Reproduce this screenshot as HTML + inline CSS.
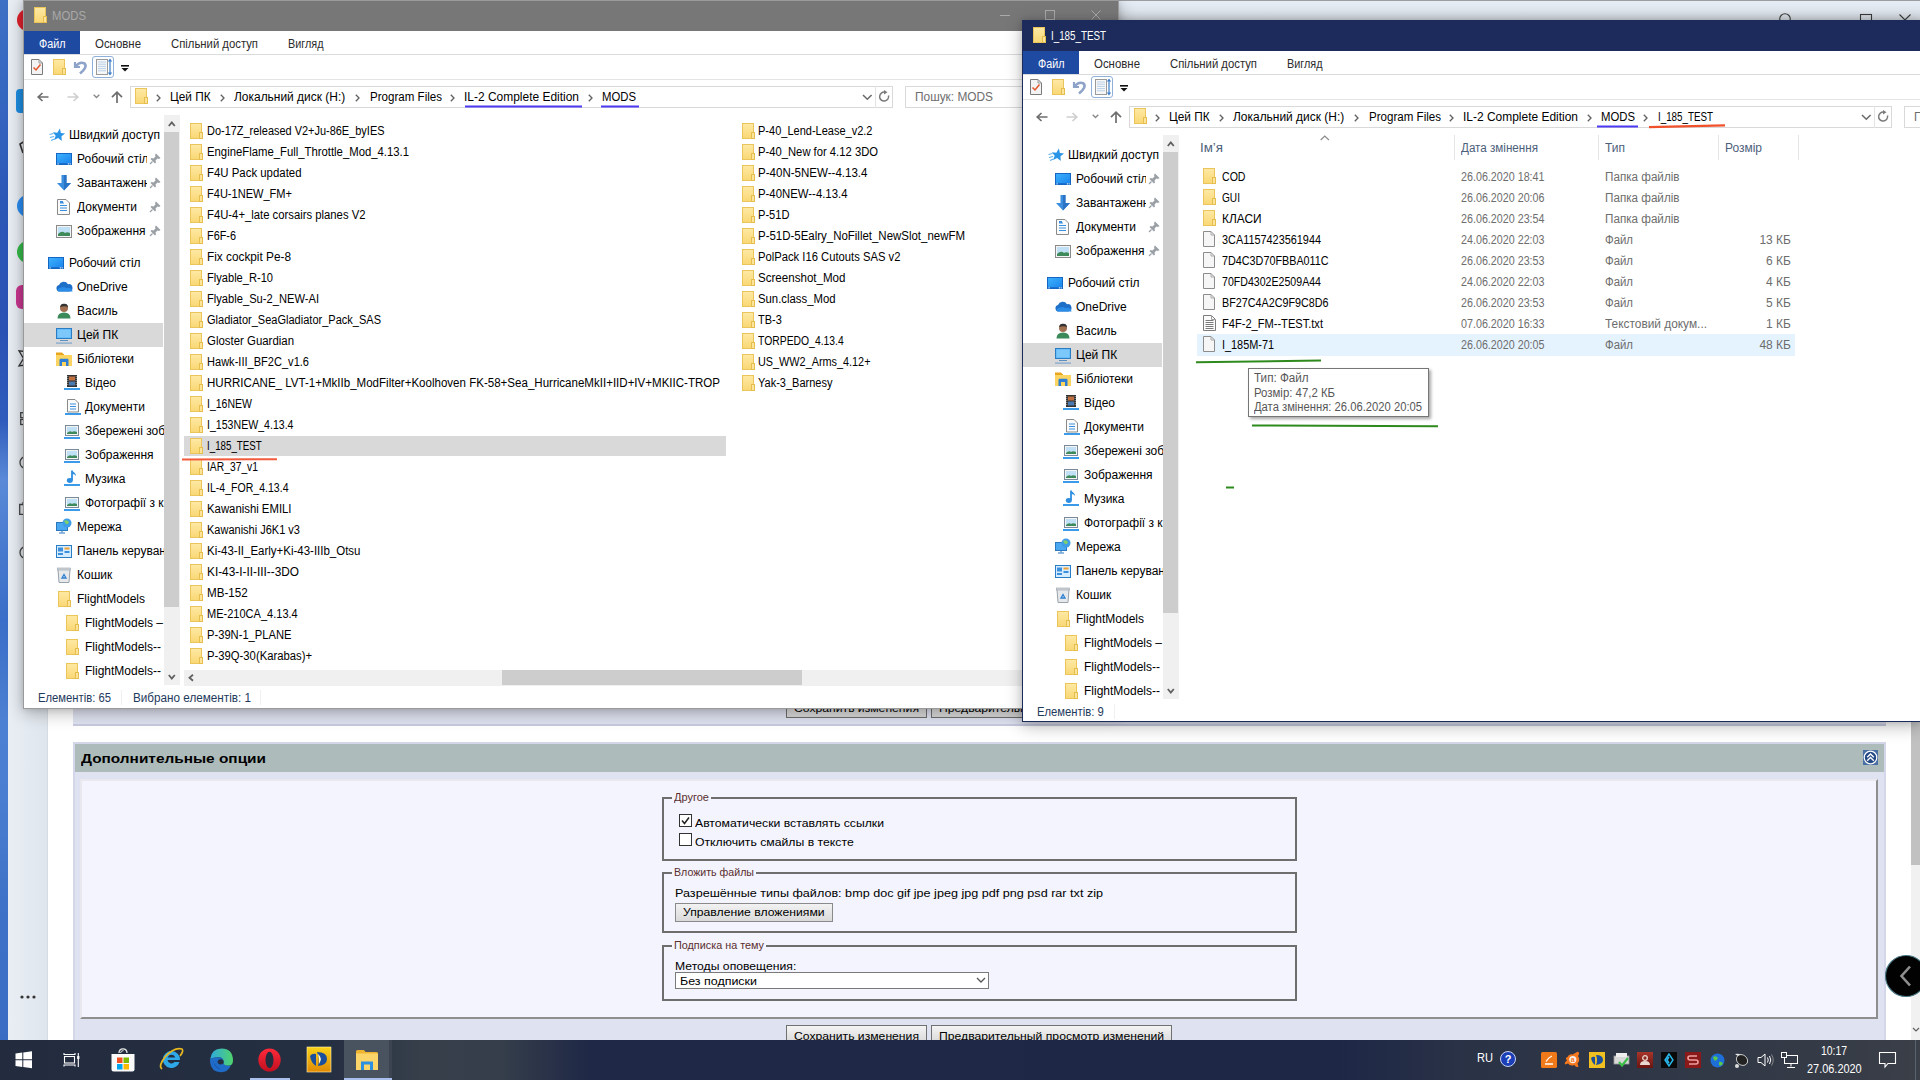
<!DOCTYPE html>
<html><head><meta charset="utf-8"><title>screen</title>
<style>
html,body{margin:0;padding:0;width:1920px;height:1080px;overflow:hidden;background:#fff;}
body{position:relative;font-family:"Liberation Sans", sans-serif;}
.t{position:absolute;white-space:pre;}
svg{overflow:visible}
</style></head><body>
<div style="position:absolute;left:0px;top:0px;width:8px;height:1040px;background:linear-gradient(180deg,#3e70c6 0px,#3566c0 100px,#2c58b8 200px,#2a52b4 330px,#2f5cbc 420px,#5a8ad8 480px,#4a7cd0 540px,#3a6ec8 620px,#4c80d2 720px,#4a7ed0 800px,#3e72c8 900px,#3a6cc4 1040px)"></div><div style="position:absolute;left:8px;top:0px;width:1912px;height:1040px;background:#fff"></div><div style="position:absolute;left:8px;top:0px;width:1912px;height:20px;background:linear-gradient(180deg,#e6edf5 0%,#dfe6ee 50%,#cdd2d8 100%)"></div><div style="position:absolute;left:8px;top:0px;width:1912px;height:1px;background:#9a9ea3"></div><svg style="position:absolute;left:1778px;top:12px;" width="14" height="10" viewBox="0 0 14 10"><circle cx="7" cy="7" r="5.3" fill="none" stroke="#3a3a3a" stroke-width="1.1"/></svg><svg style="position:absolute;left:1860px;top:14px;" width="13" height="8" viewBox="0 0 13 8"><rect x="0.5" x2="0" y="0.5" width="11" height="9" fill="none" stroke="#3a3a3a" stroke-width="1.1"/></svg><svg style="position:absolute;left:1899px;top:14px;" width="13" height="8" viewBox="0 0 13 8"><path d="M0.5 0.5 L6 6 L11.5 0.5" fill="none" stroke="#3a3a3a" stroke-width="1.1"/></svg><div style="position:absolute;left:8px;top:0px;width:40px;height:1040px;background:linear-gradient(90deg,#e9eef4 0%,#e3e9f0 60%,#dfe5ec 100%)"></div><div style="position:absolute;left:47px;top:0px;width:1px;height:1040px;background:#d6dce3"></div><svg style="position:absolute;left:16px;top:8px;" width="10" height="24" viewBox="0 0 10 24"><circle cx="12" cy="12" r="11" fill="#e0212d"/></svg><svg style="position:absolute;left:16px;top:89px;" width="10" height="24" viewBox="0 0 10 24"><rect x="0" y="0" width="24" height="24" rx="4" fill="#1e8de0"/></svg><svg style="position:absolute;left:19px;top:140px;" width="6" height="14" viewBox="0 0 6 14"><path d="M6 1 L1 4 L4 13" fill="none" stroke="#333" stroke-width="1.6"/></svg><svg style="position:absolute;left:16px;top:194px;" width="10" height="24" viewBox="0 0 10 24"><circle cx="12" cy="12" r="11" fill="#2a8cf0"/></svg><svg style="position:absolute;left:16px;top:240px;" width="10" height="24" viewBox="0 0 10 24"><circle cx="12" cy="12" r="11" fill="#35b94a"/></svg><svg style="position:absolute;left:16px;top:285px;" width="10" height="24" viewBox="0 0 10 24"><rect x="0" y="0" width="24" height="24" rx="6" fill="#c8378f"/></svg><svg style="position:absolute;left:18px;top:350px;" width="7" height="17" viewBox="0 0 7 17"><path d="M7 1.5 L1 0.8 L5.5 8.5 L1 16 L7 15" fill="none" stroke="#333" stroke-width="1.3"/></svg><svg style="position:absolute;left:20px;top:412px;" width="5" height="14" viewBox="0 0 5 14"><rect x="0.7" y="0.7" width="6" height="5" fill="none" stroke="#444" stroke-width="1.3"/><rect x="0.7" y="7.5" width="6" height="5" fill="none" stroke="#444" stroke-width="1.3"/></svg><svg style="position:absolute;left:19px;top:456px;" width="6" height="13" viewBox="0 0 6 13"><circle cx="7" cy="6.5" r="6" fill="none" stroke="#444" stroke-width="1.3"/></svg><svg style="position:absolute;left:19px;top:502px;" width="6" height="13" viewBox="0 0 6 13"><path d="M8 2.5 H0.7 V12.3 H8 M4 2.5 V0.7 H8" fill="none" stroke="#444" stroke-width="1.3"/></svg><svg style="position:absolute;left:19px;top:546px;" width="6" height="13" viewBox="0 0 6 13"><circle cx="7" cy="6.5" r="6" fill="none" stroke="#444" stroke-width="1.3"/></svg><svg style="position:absolute;left:20px;top:994px;" width="18" height="6" viewBox="0 0 18 6"><circle cx="2" cy="3" r="1.6" fill="#333"/><circle cx="8" cy="3" r="1.6" fill="#333"/><circle cx="14" cy="3" r="1.6" fill="#333"/></svg><div style="position:absolute;left:48px;top:20px;width:1863px;height:1020px;background:#fff"></div><div style="position:absolute;left:1911px;top:20px;width:9px;height:1020px;background:#f1f1f1"></div><div style="position:absolute;left:1911px;top:20px;width:9px;height:845px;background:#c1c1c1"></div><svg style="position:absolute;left:1912px;top:1026px;" width="8" height="8" viewBox="0 0 8 8"><path d="M1 2 L4 5 L7 2" fill="none" stroke="#606060" stroke-width="1.2"/></svg><div style="position:absolute;left:73px;top:560px;width:1813px;height:166px;background:#dfe2f0;border-bottom:2px solid #c8cbe0;box-sizing:border-box"></div><div style="position:absolute;left:786px;top:697px;width:141px;height:21px;background:linear-gradient(180deg,#f4f4f4 0%,#e4e4e4 50%,#d6d6d6 100%);border:1px solid #707070;box-sizing:border-box"></div><div class="t" style="left:794px;top:702.69px;font-size:11px;line-height:11px;color:#000;transform:scaleX(1.1065);transform-origin:left top;">Сохранить изменения</div><div style="position:absolute;left:931px;top:697px;width:241px;height:21px;background:linear-gradient(180deg,#f4f4f4 0%,#e4e4e4 50%,#d6d6d6 100%);border:1px solid #707070;box-sizing:border-box"></div><div class="t" style="left:939px;top:702.69px;font-size:11px;line-height:11px;color:#000;transform:scaleX(1.1074);transform-origin:left top;">Предварительный просмотр изменений</div><div style="position:absolute;left:73px;top:742px;width:1813px;height:298px;background:#dfe3f1"></div><div style="position:absolute;left:73px;top:742px;width:1813px;height:2px;background:#d4d7ea"></div><div style="position:absolute;left:73px;top:742px;width:2px;height:298px;background:#d4d7ea"></div><div style="position:absolute;left:1884px;top:742px;width:2px;height:298px;background:#d4d7ea"></div><div style="position:absolute;left:75px;top:744px;width:1809px;height:28px;background:#adbbbb"></div><div class="t" style="left:81px;top:752.30px;font-size:13px;line-height:13px;color:#000;font-weight:700;transform:scaleX(1.1833);transform-origin:left top;">Дополнительные опции</div><svg style="position:absolute;left:1863px;top:750px;" width="15" height="15" viewBox="0 0 15 15"><rect x="0" y="0" width="15" height="15" fill="#4a6fa5"/><circle cx="7.5" cy="7.5" r="6.3" fill="#254a86" stroke="#fff" stroke-width="1.2"/><path d="M4.2 7.2 L7.5 4 L10.8 7.2 M4.2 10.8 L7.5 7.6 L10.8 10.8" fill="none" stroke="#fff" stroke-width="1.4"/></svg><div style="position:absolute;left:80px;top:779px;width:1798px;height:240px;background:#f3f4fd;border-top:2px solid #e8e8ee;border-left:2px solid #e8e8ee;border-right:2px solid #8f8f8f;border-bottom:2px solid #8f8f8f;box-sizing:border-box"></div><div style="position:absolute;left:662px;top:797px;width:635px;height:64px;border:2px solid #6e6e6e;box-sizing:border-box"></div><div style="position:absolute;left:672px;top:796px;width:39px;height:4px;background:#f3f4fd"></div><div class="t" style="left:674px;top:792.19px;font-size:11px;line-height:11px;color:#5a2e2e;transform:scaleX(1.0013);transform-origin:left top;">Другое</div><div style="position:absolute;left:662px;top:872px;width:635px;height:61px;border:2px solid #6e6e6e;box-sizing:border-box"></div><div style="position:absolute;left:672px;top:871px;width:84px;height:4px;background:#f3f4fd"></div><div class="t" style="left:674px;top:867.19px;font-size:11px;line-height:11px;color:#5a2e2e;transform:scaleX(0.9657);transform-origin:left top;">Вложить файлы</div><div style="position:absolute;left:662px;top:945px;width:635px;height:56px;border:2px solid #6e6e6e;box-sizing:border-box"></div><div style="position:absolute;left:672px;top:944px;width:94px;height:4px;background:#f3f4fd"></div><div class="t" style="left:674px;top:940.19px;font-size:11px;line-height:11px;color:#5a2e2e;transform:scaleX(0.9836);transform-origin:left top;">Подписка на тему</div><div style="position:absolute;left:679px;top:814px;width:13px;height:13px;background:#fff;border:1px solid #333;box-sizing:border-box"></div><svg style="position:absolute;left:681px;top:816px;" width="9" height="9" viewBox="0 0 9 9"><path d="M1 4.5 L3.5 7.5 L8 1.5" fill="none" stroke="#222" stroke-width="1.5"/></svg><div class="t" style="left:695px;top:817.69px;font-size:11px;line-height:11px;color:#000;transform:scaleX(1.1099);transform-origin:left top;">Автоматически вставлять ссылки</div><div style="position:absolute;left:679px;top:833px;width:13px;height:13px;background:#fff;border:1px solid #333;box-sizing:border-box"></div><div class="t" style="left:695px;top:836.69px;font-size:11px;line-height:11px;color:#000;transform:scaleX(1.1116);transform-origin:left top;">Отключить смайлы в тексте</div><div class="t" style="left:675px;top:888.49px;font-size:11px;line-height:11px;color:#000;transform:scaleX(1.1460);transform-origin:left top;">Разрешённые типы файлов: bmp doc gif jpe jpeg jpg pdf png psd rar txt zip</div><div style="position:absolute;left:675px;top:903px;width:158px;height:19px;background:linear-gradient(180deg,#f2f2f2 0%,#e6e6e6 50%,#dadada 100%);border:1px solid #8a8a8a;box-sizing:border-box"></div><div class="t" style="left:683px;top:906.99px;font-size:11px;line-height:11px;color:#000;transform:scaleX(1.1088);transform-origin:left top;">Управление вложениями</div><div class="t" style="left:675px;top:960.69px;font-size:11px;line-height:11px;color:#000;transform:scaleX(1.1074);transform-origin:left top;">Методы оповещения:</div><div style="position:absolute;left:675px;top:972px;width:314px;height:17px;background:#fff;border:1px solid #7a7a7a;box-sizing:border-box"></div><div class="t" style="left:680px;top:975.69px;font-size:11px;line-height:11px;color:#000;transform:scaleX(1.1321);transform-origin:left top;">Без подписки</div><svg style="position:absolute;left:976px;top:977px;" width="10" height="7" viewBox="0 0 10 7"><path d="M1 1 L5 5 L9 1" fill="none" stroke="#555" stroke-width="1.3"/></svg><div style="position:absolute;left:786px;top:1025px;width:141px;height:21px;background:linear-gradient(180deg,#f4f4f4 0%,#e4e4e4 50%,#d6d6d6 100%);border:1px solid #707070;box-sizing:border-box"></div><div class="t" style="left:794px;top:1030.69px;font-size:11px;line-height:11px;color:#000;transform:scaleX(1.1065);transform-origin:left top;">Сохранить изменения</div><div style="position:absolute;left:931px;top:1025px;width:241px;height:21px;background:linear-gradient(180deg,#f4f4f4 0%,#e4e4e4 50%,#d6d6d6 100%);border:1px solid #707070;box-sizing:border-box"></div><div class="t" style="left:939px;top:1030.69px;font-size:11px;line-height:11px;color:#000;transform:scaleX(1.1074);transform-origin:left top;">Предварительный просмотр изменений</div><svg style="position:absolute;left:1884px;top:954px;" width="42" height="44" viewBox="0 0 42 44"><circle cx="22" cy="22" r="20.5" fill="#020202" stroke="#4a7a86" stroke-width="1.1"/><path d="M26 12.5 L17.5 22 L26 31.5" fill="none" stroke="#8e8e8e" stroke-width="2.6"/></svg><div style="position:absolute;left:23px;top:0px;width:1096px;height:709px;background:#fff;border:1px solid #9a9a9a;box-sizing:border-box;box-shadow:0 4px 16px rgba(0,0,0,0.28),0 0 6px rgba(0,0,0,0.12)"></div><div style="position:absolute;left:24px;top:1px;width:1094px;height:30px;background:#777777"></div><svg style="position:absolute;left:34px;top:7px;" width="14" height="16" viewBox="0 0 14 16"><defs><linearGradient id="fg" x1="0" y1="0" x2="0" y2="1"><stop offset="0" stop-color="#fee9a4"/><stop offset="1" stop-color="#f9d774"/></linearGradient></defs><rect x="0.5" y="0.5" width="11" height="15" fill="url(#fg)" stroke="#ebc55c"/><rect x="9.5" y="9.5" width="3" height="6" fill="#fde49a" stroke="#e6be4e"/></svg><div class="t" style="left:52px;top:9.84px;font-size:12px;line-height:12px;color:#a9a9a9;transform:scaleX(0.9444);transform-origin:left top;">MODS</div><svg style="position:absolute;left:1000px;top:15px;" width="11" height="2" viewBox="0 0 11 2"><path d="M0 0.5 H10" stroke="#a9a9a9" stroke-width="1"/></svg><svg style="position:absolute;left:1045px;top:10px;" width="11" height="11" viewBox="0 0 11 11"><rect x="0.5" y="0.5" width="9" height="9" fill="none" stroke="#a9a9a9" stroke-width="1"/></svg><svg style="position:absolute;left:1091px;top:10px;" width="11" height="11" viewBox="0 0 11 11"><path d="M0.5 0.5 L9.5 9.5 M9.5 0.5 L0.5 9.5" fill="none" stroke="#a9a9a9" stroke-width="1"/></svg><div style="position:absolute;left:24px;top:31px;width:1094px;height:23px;background:#fff"></div><div style="position:absolute;left:24px;top:54px;width:1094px;height:1px;background:#dadbdc"></div><div style="position:absolute;left:24px;top:31px;width:56px;height:23px;background:#1f4aa2"></div><div class="t" style="left:38.75px;top:37.84px;font-size:12px;line-height:12px;color:#fff;transform:scaleX(0.8978);transform-origin:left top;">Файл</div><div class="t" style="left:94.5px;top:37.84px;font-size:12px;line-height:12px;color:#2b2b2b;transform:scaleX(0.9521);transform-origin:left top;">Основне</div><div class="t" style="left:170.5px;top:37.84px;font-size:12px;line-height:12px;color:#2b2b2b;transform:scaleX(0.9429);transform-origin:left top;">Спільний доступ</div><div class="t" style="left:287.5px;top:37.84px;font-size:12px;line-height:12px;color:#2b2b2b;transform:scaleX(0.9027);transform-origin:left top;">Вигляд</div><div style="position:absolute;left:24px;top:79px;width:1094px;height:1px;background:#e3e4e5"></div><svg style="position:absolute;left:31px;top:59px;" width="12" height="16" viewBox="0 0 12 16"><path d="M0.5 0.5 H8 L11.5 4 V15.5 H0.5 Z" fill="#f3f3f3" stroke="#7a7a7a"/><path d="M8 0.5 V4 H11.5" fill="none" stroke="#9a9a9a"/><path d="M2.5 8.5 L5 11 L9.5 5.5" fill="none" stroke="#e2572b" stroke-width="1.5"/></svg><svg style="position:absolute;left:53px;top:59px;" width="14" height="16" viewBox="0 0 14 16"><defs><linearGradient id="fg" x1="0" y1="0" x2="0" y2="1"><stop offset="0" stop-color="#fee9a4"/><stop offset="1" stop-color="#f9d774"/></linearGradient></defs><rect x="0.5" y="0.5" width="11" height="15" fill="url(#fg)" stroke="#ebc55c"/><rect x="9.5" y="9.5" width="3" height="6" fill="#fde49a" stroke="#e6be4e"/></svg><svg style="position:absolute;left:74px;top:59px;" width="14" height="16" viewBox="0 0 14 16"><path d="M1 3 V8 H6" fill="none" stroke="#8ea3c9" stroke-width="2.2"/><path d="M1.5 7.5 Q6 2 10.5 4.5 Q14 8 6 14.5" fill="none" stroke="#8ea3c9" stroke-width="2.6"/></svg><svg style="position:absolute;left:92px;top:56px;" width="22" height="22" viewBox="0 0 22 22"><rect x="0.5" y="0.5" width="21" height="21" rx="2.5" fill="#fdfeff" stroke="#8fb0d8"/><rect x="4.5" y="3.5" width="11" height="15" fill="#f7f7f7" stroke="#9a9a9a"/><path d="M6 6 H14 M6 8.2 H14 M6 10.4 H14 M6 12.6 H14 M6 14.8 H14" stroke="#b8d0e8" stroke-width="1"/><path d="M18 4 V18 M16.5 5.5 L18 3.5 L19.5 5.5 M16.5 16.5 L18 18.5 L19.5 16.5" fill="none" stroke="#3b7cc9" stroke-width="1.2"/></svg><svg style="position:absolute;left:121px;top:65px;" width="8" height="7" viewBox="0 0 8 7"><rect x="0" y="0" width="8" height="1.6" fill="#111"/><path d="M0.5 3 H7.5 L4 6.5 Z" fill="#111"/></svg><svg style="position:absolute;left:37px;top:92px;" width="12" height="11" viewBox="0 0 12 11"><path d="M11.5 5 H1.5 M5.5 1 L1.2 5 L5.5 9" fill="none" stroke="#6e6e6e" stroke-width="1.7"/></svg><svg style="position:absolute;left:67px;top:92px;" width="12" height="11" viewBox="0 0 12 11"><path d="M0.5 5 H10.5 M6.5 1 L10.8 5 L6.5 9" fill="none" stroke="#cfcfcf" stroke-width="1.7"/></svg><svg style="position:absolute;left:93px;top:94px;" width="8" height="5" viewBox="0 0 8 5"><path d="M0.7 0.7 L3.5 3.5 L6.3 0.7" fill="none" stroke="#8a8a8a" stroke-width="1.4"/></svg><svg style="position:absolute;left:111px;top:91px;" width="12" height="12" viewBox="0 0 12 12"><path d="M6 12 V1.5 M1 6.2 L6 1.2 L11 6.2" fill="none" stroke="#6e6e6e" stroke-width="1.7"/></svg><div style="position:absolute;left:130px;top:86px;width:763px;height:22px;background:#fff;border:1px solid #d9d9d9;box-sizing:border-box"></div><div style="position:absolute;left:875px;top:86px;width:1px;height:22px;background:#e3e3e3"></div><svg style="position:absolute;left:135px;top:88px;" width="14" height="16" viewBox="0 0 14 16"><defs><linearGradient id="fg" x1="0" y1="0" x2="0" y2="1"><stop offset="0" stop-color="#fee9a4"/><stop offset="1" stop-color="#f9d774"/></linearGradient></defs><rect x="0.5" y="0.5" width="11" height="15" fill="url(#fg)" stroke="#ebc55c"/><rect x="9.5" y="9.5" width="3" height="6" fill="#fde49a" stroke="#e6be4e"/></svg><svg style="position:absolute;left:862px;top:94px;" width="11" height="7" viewBox="0 0 11 7"><path d="M1 1 L5.3 5.3 L9.6 1" fill="none" stroke="#6a6a6a" stroke-width="1.5"/></svg><svg style="position:absolute;left:879px;top:90px;" width="12" height="13" viewBox="0 0 12 13"><path d="M9.5 5.5 A4.5 4.5 0 1 1 6 2.2" fill="none" stroke="#7a7a7a" stroke-width="1.5"/><path d="M5 0 L8.5 2.3 L5 4.6 Z" fill="#7a7a7a"/></svg><svg style="position:absolute;left:156px;top:93.5px;" width="5" height="8" viewBox="0 0 5 8"><path d="M0.8 0.8 L4 4 L0.8 7.2" fill="none" stroke="#5f5f5f" stroke-width="1.3"/></svg><div class="t" style="left:170.4px;top:90.84px;font-size:12px;line-height:12px;color:#000;transform:scaleX(0.9854);transform-origin:left top;">Цей ПК</div><svg style="position:absolute;left:220px;top:93.5px;" width="5" height="8" viewBox="0 0 5 8"><path d="M0.8 0.8 L4 4 L0.8 7.2" fill="none" stroke="#5f5f5f" stroke-width="1.3"/></svg><div class="t" style="left:234px;top:90.84px;font-size:12px;line-height:12px;color:#000;transform:scaleX(0.9961);transform-origin:left top;">Локальний диск (H:)</div><svg style="position:absolute;left:355.4px;top:93.5px;" width="5" height="8" viewBox="0 0 5 8"><path d="M0.8 0.8 L4 4 L0.8 7.2" fill="none" stroke="#5f5f5f" stroke-width="1.3"/></svg><div class="t" style="left:369.6px;top:90.84px;font-size:12px;line-height:12px;color:#000;transform:scaleX(0.9640);transform-origin:left top;">Program Files</div><svg style="position:absolute;left:450px;top:93.5px;" width="5" height="8" viewBox="0 0 5 8"><path d="M0.8 0.8 L4 4 L0.8 7.2" fill="none" stroke="#5f5f5f" stroke-width="1.3"/></svg><div class="t" style="left:464px;top:90.84px;font-size:12px;line-height:12px;color:#000;transform:scaleX(0.9965);transform-origin:left top;">IL-2 Complete Edition</div><svg style="position:absolute;left:588px;top:93.5px;" width="5" height="8" viewBox="0 0 5 8"><path d="M0.8 0.8 L4 4 L0.8 7.2" fill="none" stroke="#5f5f5f" stroke-width="1.3"/></svg><div class="t" style="left:602px;top:90.84px;font-size:12px;line-height:12px;color:#000;transform:scaleX(0.9444);transform-origin:left top;">MODS</div><div style="position:absolute;left:905px;top:86px;width:300px;height:22px;background:#fff;border:1px solid #d9d9d9;box-sizing:border-box"></div><div class="t" style="left:914.6px;top:90.84px;font-size:12px;line-height:12px;color:#6d6d6d;transform:scaleX(0.9893);transform-origin:left top;">Пошук: MODS</div><div style="position:absolute;left:24px;top:115px;width:140px;height:570px;overflow:hidden;background:#fff"><div style="position:absolute;left:0px;top:208px;width:139px;height:24px;background:#d9d9d9"></div><svg style="position:absolute;left:25px;top:13px;" width="16" height="16" viewBox="0 0 16 16"><path d="M10 0.5 L11.6 4.8 L15.8 4.6 L12.6 7.8 L13.6 12.5 L9.6 10.2 L5.8 12.6 L6.8 8.2 L3.6 5.2 L8 4.9 Z" fill="#2a95e6" transform="rotate(8 10 7)"/><path d="M0.5 6.5 L4.5 5.5 M1 9.5 L5 8.5 M2 12.5 L5.5 11" stroke="#5ab0ee" stroke-width="1.1"/></svg><div class="t" style="left:45px;top:13.84px;font-size:12px;line-height:12px;color:#000;">Швидкий доступ</div><svg style="position:absolute;left:32px;top:38px;" width="16" height="12" viewBox="0 0 16 12"><defs><linearGradient id="dg" x1="0" y1="0" x2="1" y2="1"><stop offset="0" stop-color="#3db0fb"/><stop offset="1" stop-color="#1c86ee"/></linearGradient></defs><rect x="0" y="0" width="16" height="12" fill="#1466c4"/><rect x="1" y="1" width="14" height="9.2" fill="url(#dg)"/><rect x="1.5" y="10.4" width="1.2" height="1" fill="#fff"/><rect x="11.8" y="10.4" width="1.2" height="1" fill="#fff"/><rect x="13.6" y="10.4" width="1.2" height="1" fill="#fff"/></svg><div class="t" style="left:53px;top:37.84px;font-size:12px;line-height:12px;color:#000;width:70px;overflow:hidden;">Робочий стіл</div><svg style="position:absolute;left:126px;top:38px;" width="11" height="11" viewBox="0 0 11 11"><path d="M6 0.5 L10.5 5 L9 6 L7.5 5.5 L5.5 7.5 L6 9.5 L5 10.5 L0.5 6 L1.5 5 L3.5 5.5 L5.5 3.5 L5 2 Z" fill="#9aa0a6"/><path d="M2.5 8.5 L0 11" stroke="#9aa0a6" stroke-width="1.2"/></svg><svg style="position:absolute;left:32px;top:60px;" width="16" height="16" viewBox="0 0 16 16"><path d="M5.5 0 H10.5 V8 H15 L8 15.5 L1 8 H5.5 Z" fill="#3b8ede"/><path d="M8 0 H10.5 V8 H15 L8 15.5 Z" fill="#2a73c5"/></svg><div class="t" style="left:53px;top:61.84px;font-size:12px;line-height:12px;color:#000;width:70px;overflow:hidden;">Завантаження</div><svg style="position:absolute;left:126px;top:62px;" width="11" height="11" viewBox="0 0 11 11"><path d="M6 0.5 L10.5 5 L9 6 L7.5 5.5 L5.5 7.5 L6 9.5 L5 10.5 L0.5 6 L1.5 5 L3.5 5.5 L5.5 3.5 L5 2 Z" fill="#9aa0a6"/><path d="M2.5 8.5 L0 11" stroke="#9aa0a6" stroke-width="1.2"/></svg><svg style="position:absolute;left:33px;top:84px;" width="13" height="16" viewBox="0 0 13 16"><path d="M0.5 0.5 H9 L12.5 4 V15.5 H0.5 Z" fill="#fafafa" stroke="#8a8a8a"/><path d="M3 4 H7 M3 6.5 H10 M3 9 H10 M3 11.5 H10" stroke="#3c8fdc" stroke-width="1.2"/><rect x="3" y="2" width="3" height="2" fill="#3c8fdc"/></svg><div class="t" style="left:53px;top:85.84px;font-size:12px;line-height:12px;color:#000;width:70px;overflow:hidden;">Документи</div><svg style="position:absolute;left:126px;top:86px;" width="11" height="11" viewBox="0 0 11 11"><path d="M6 0.5 L10.5 5 L9 6 L7.5 5.5 L5.5 7.5 L6 9.5 L5 10.5 L0.5 6 L1.5 5 L3.5 5.5 L5.5 3.5 L5 2 Z" fill="#9aa0a6"/><path d="M2.5 8.5 L0 11" stroke="#9aa0a6" stroke-width="1.2"/></svg><svg style="position:absolute;left:32px;top:110px;" width="16" height="13" viewBox="0 0 16 13"><rect x="0.5" y="0.5" width="15" height="12" fill="#f4f4f4" stroke="#8a8a8a"/><rect x="2" y="2" width="12" height="9" fill="#bfe0f5"/><path d="M2 9 Q6 5 9 8 Q11 6.5 14 8 V11 H2 Z" fill="#3f8a5a"/></svg><div class="t" style="left:53px;top:109.84px;font-size:12px;line-height:12px;color:#000;width:70px;overflow:hidden;">Зображення</div><svg style="position:absolute;left:126px;top:110px;" width="11" height="11" viewBox="0 0 11 11"><path d="M6 0.5 L10.5 5 L9 6 L7.5 5.5 L5.5 7.5 L6 9.5 L5 10.5 L0.5 6 L1.5 5 L3.5 5.5 L5.5 3.5 L5 2 Z" fill="#9aa0a6"/><path d="M2.5 8.5 L0 11" stroke="#9aa0a6" stroke-width="1.2"/></svg><svg style="position:absolute;left:24px;top:142px;" width="16" height="12" viewBox="0 0 16 12"><defs><linearGradient id="dg" x1="0" y1="0" x2="1" y2="1"><stop offset="0" stop-color="#3db0fb"/><stop offset="1" stop-color="#1c86ee"/></linearGradient></defs><rect x="0" y="0" width="16" height="12" fill="#1466c4"/><rect x="1" y="1" width="14" height="9.2" fill="url(#dg)"/><rect x="1.5" y="10.4" width="1.2" height="1" fill="#fff"/><rect x="11.8" y="10.4" width="1.2" height="1" fill="#fff"/><rect x="13.6" y="10.4" width="1.2" height="1" fill="#fff"/></svg><div class="t" style="left:45px;top:141.84px;font-size:12px;line-height:12px;color:#000;">Робочий стіл</div><svg style="position:absolute;left:32px;top:166px;" width="17" height="11" viewBox="0 0 17 11"><path d="M3.5 10.5 A3.3 3.3 0 0 1 3 4 A5 5 0 0 1 12 3.2 A3.6 3.6 0 0 1 13.5 10.5 Z" fill="#1d6fc8"/><path d="M2 10.5 Q1 7 5 6.6 Q8 5 10 7 Q16 6 16.5 10.5 Z" fill="#2a8ce6"/></svg><div class="t" style="left:53px;top:165.84px;font-size:12px;line-height:12px;color:#000;">OneDrive</div><svg style="position:absolute;left:33px;top:188px;" width="14" height="16" viewBox="0 0 14 16"><path d="M0.5 15.5 Q0.5 9.5 7 9.5 Q13.5 9.5 13.5 15.5 Z" fill="#3b8a5a"/><circle cx="7" cy="5" r="4" fill="#a07050"/><path d="M3 4 Q4 0 7.5 0.8 Q11 1 11 4.5 Q9 2.5 3 4 Z" fill="#333"/></svg><div class="t" style="left:53px;top:189.84px;font-size:12px;line-height:12px;color:#000;">Василь</div><svg style="position:absolute;left:32px;top:213px;" width="16" height="16" viewBox="0 0 16 16"><rect x="0.5" y="0.5" width="15" height="10" fill="#56b4f5" stroke="#2a7cc4"/><rect x="1.5" y="1.5" width="13" height="8" fill="#7dc8fb"/><rect x="4" y="12" width="8" height="1" fill="#5f8fbf"/><rect x="0" y="14.5" width="16" height="1.2" fill="#7fa6cf"/></svg><div class="t" style="left:53px;top:213.84px;font-size:12px;line-height:12px;color:#000;">Цей ПК</div><svg style="position:absolute;left:32px;top:237px;" width="16" height="14" viewBox="0 0 16 14"><path d="M0 0.5 H6 L7.5 2 H8 V3.5 H0 Z" fill="#e9a51e"/><rect x="0" y="3" width="16" height="11" fill="#fbd462"/><path d="M3.5 14 V8 Q3.5 6.8 4.7 6.8 H11.3 Q12.5 6.8 12.5 8 V14 H10 V10 H6 V14 Z" fill="#2d7fd6"/></svg><div class="t" style="left:53px;top:237.84px;font-size:12px;line-height:12px;color:#000;">Бібліотеки</div><svg style="position:absolute;left:40px;top:260px;" width="16" height="15" viewBox="0 0 16 15"><rect x="3" y="0" width="10" height="12" fill="#333"/><rect x="5" y="1.5" width="6" height="4" fill="#c07040"/><rect x="5" y="6.5" width="6" height="4" fill="#4a7ab0"/><path d="M3.8 1 V11 M12.2 1 V11" stroke="#aaa" stroke-width="1" stroke-dasharray="1 1"/><path d="M0 14 H16" stroke="#3c9be8" stroke-width="2"/></svg><div class="t" style="left:61px;top:261.84px;font-size:12px;line-height:12px;color:#000;">Відео</div><svg style="position:absolute;left:41px;top:284px;" width="16" height="16" viewBox="0 0 16 16"><path d="M2.5 0.5 H10 L13.5 4 V13 H2.5 Z" fill="#fafafa" stroke="#8a8a8a"/><path d="M5 5 H11 M5 7.5 H11 M5 10 H11" stroke="#3c8fdc" stroke-width="1.2"/><path d="M0 15 H16" stroke="#3c9be8" stroke-width="2"/></svg><div class="t" style="left:61px;top:285.84px;font-size:12px;line-height:12px;color:#000;">Документи</div><svg style="position:absolute;left:40px;top:309px;" width="16" height="15" viewBox="0 0 16 15"><rect x="1.5" y="1.5" width="13" height="10" fill="#f4f4f4" stroke="#7a8a9a"/><rect x="3" y="3" width="10" height="7" fill="#bfe0f5"/><path d="M3 9 Q6 6 8 8 Q10 6.5 13 8 V10 H3 Z" fill="#3f8a5a"/><path d="M0 14 H16" stroke="#3c9be8" stroke-width="2"/></svg><div class="t" style="left:61px;top:309.84px;font-size:12px;line-height:12px;color:#000;">Збережені зображення</div><svg style="position:absolute;left:40px;top:333px;" width="16" height="15" viewBox="0 0 16 15"><rect x="1.5" y="1.5" width="13" height="10" fill="#f4f4f4" stroke="#7a8a9a"/><rect x="3" y="3" width="10" height="7" fill="#bfe0f5"/><path d="M3 9 Q6 6 8 8 Q10 6.5 13 8 V10 H3 Z" fill="#3f8a5a"/><path d="M0 14 H16" stroke="#3c9be8" stroke-width="2"/></svg><div class="t" style="left:61px;top:333.84px;font-size:12px;line-height:12px;color:#000;">Зображення</div><svg style="position:absolute;left:40px;top:355px;" width="16" height="16" viewBox="0 0 16 16"><path d="M8 0.5 V10" stroke="#2e8fe0" stroke-width="1.8"/><path d="M8 1 Q12 3 12 6 Q11 4 8.5 4" fill="#2e8fe0"/><ellipse cx="5.8" cy="10.5" rx="3" ry="2.4" fill="#2e8fe0"/><path d="M0 15 H16" stroke="#3c9be8" stroke-width="2"/></svg><div class="t" style="left:61px;top:357.84px;font-size:12px;line-height:12px;color:#000;">Музика</div><svg style="position:absolute;left:40px;top:381px;" width="16" height="15" viewBox="0 0 16 15"><rect x="1.5" y="1.5" width="13" height="10" fill="#f4f4f4" stroke="#7a8a9a"/><rect x="3" y="3" width="10" height="7" fill="#bfe0f5"/><path d="M3 9 Q6 6 8 8 Q10 6.5 13 8 V10 H3 Z" fill="#3f8a5a"/><path d="M0 14 H16" stroke="#3c9be8" stroke-width="2"/></svg><div class="t" style="left:61px;top:381.84px;font-size:12px;line-height:12px;color:#000;">Фотографії з камери</div><svg style="position:absolute;left:32px;top:403px;" width="16" height="16" viewBox="0 0 16 16"><rect x="0.5" y="4.5" width="11" height="8" fill="#4aa8f0" stroke="#2a78c0"/><path d="M6 12.5 V14.5 M3 15 H9" stroke="#2a78c0"/><circle cx="11" cy="5" r="4.5" fill="#3d9de8"/><path d="M8 3 Q11 1 13 4 Q12 7 10 6 Z" fill="#7fd06a"/></svg><div class="t" style="left:53px;top:405.84px;font-size:12px;line-height:12px;color:#000;">Мережа</div><svg style="position:absolute;left:32px;top:430px;" width="16" height="13" viewBox="0 0 16 13"><rect x="0.5" y="0.5" width="15" height="12" fill="#d6ecff" stroke="#2a7cc4"/><rect x="2" y="2.5" width="5" height="4" fill="#3c8fdc"/><rect x="8.5" y="2.5" width="5" height="2" fill="#f0a030"/><rect x="8.5" y="6" width="5" height="2" fill="#3c8fdc"/><rect x="2" y="8" width="5" height="2" fill="#3c8fdc"/></svg><div class="t" style="left:53px;top:429.84px;font-size:12px;line-height:12px;color:#000;">Панель керування</div><svg style="position:absolute;left:33px;top:452px;" width="14" height="16" viewBox="0 0 14 16"><path d="M1 2.5 H13 L12 15.5 H2 Z" fill="#e6e9ec" stroke="#9aa2aa"/><rect x="0.5" y="1" width="13" height="2" fill="#cfd4d9" stroke="#9aa2aa" stroke-width="0.6"/><path d="M5 11 L7 7.5 L9 11 Z" fill="none" stroke="#2e7fd0" stroke-width="1.3"/></svg><div class="t" style="left:53px;top:453.84px;font-size:12px;line-height:12px;color:#000;">Кошик</div><svg style="position:absolute;left:34px;top:476px;" width="14" height="16" viewBox="0 0 14 16"><defs><linearGradient id="fg" x1="0" y1="0" x2="0" y2="1"><stop offset="0" stop-color="#fee9a4"/><stop offset="1" stop-color="#f9d774"/></linearGradient></defs><rect x="0.5" y="0.5" width="11" height="15" fill="url(#fg)" stroke="#ebc55c"/><rect x="9.5" y="9.5" width="3" height="6" fill="#fde49a" stroke="#e6be4e"/></svg><div class="t" style="left:53px;top:477.84px;font-size:12px;line-height:12px;color:#000;">FlightModels</div><svg style="position:absolute;left:42px;top:500px;" width="14" height="16" viewBox="0 0 14 16"><defs><linearGradient id="fg" x1="0" y1="0" x2="0" y2="1"><stop offset="0" stop-color="#fee9a4"/><stop offset="1" stop-color="#f9d774"/></linearGradient></defs><rect x="0.5" y="0.5" width="11" height="15" fill="url(#fg)" stroke="#ebc55c"/><rect x="9.5" y="9.5" width="3" height="6" fill="#fde49a" stroke="#e6be4e"/></svg><div class="t" style="left:61px;top:501.84px;font-size:12px;line-height:12px;color:#000;">FlightModels – Copy</div><svg style="position:absolute;left:42px;top:524px;" width="14" height="16" viewBox="0 0 14 16"><defs><linearGradient id="fg" x1="0" y1="0" x2="0" y2="1"><stop offset="0" stop-color="#fee9a4"/><stop offset="1" stop-color="#f9d774"/></linearGradient></defs><rect x="0.5" y="0.5" width="11" height="15" fill="url(#fg)" stroke="#ebc55c"/><rect x="9.5" y="9.5" width="3" height="6" fill="#fde49a" stroke="#e6be4e"/></svg><div class="t" style="left:61px;top:525.84px;font-size:12px;line-height:12px;color:#000;">FlightModels--</div><svg style="position:absolute;left:42px;top:548px;" width="14" height="16" viewBox="0 0 14 16"><defs><linearGradient id="fg" x1="0" y1="0" x2="0" y2="1"><stop offset="0" stop-color="#fee9a4"/><stop offset="1" stop-color="#f9d774"/></linearGradient></defs><rect x="0.5" y="0.5" width="11" height="15" fill="url(#fg)" stroke="#ebc55c"/><rect x="9.5" y="9.5" width="3" height="6" fill="#fde49a" stroke="#e6be4e"/></svg><div class="t" style="left:61px;top:549.84px;font-size:12px;line-height:12px;color:#000;">FlightModels--</div></div><div style="position:absolute;left:164px;top:115px;width:16px;height:570px;background:#f0f0f0"></div><div style="position:absolute;left:164px;top:132px;width:15px;height:475px;background:#cdcdcd"></div><svg style="position:absolute;left:168px;top:121px;" width="8" height="6" viewBox="0 0 8 6"><path d="M0.8 5 L3.8 1.5 L6.8 5" fill="none" stroke="#606060" stroke-width="1.8"/></svg><svg style="position:absolute;left:168px;top:674px;" width="8" height="6" viewBox="0 0 8 6"><path d="M0.8 1 L3.8 4.5 L6.8 1" fill="none" stroke="#606060" stroke-width="1.8"/></svg><div class="t" style="left:38.4px;top:691.54px;font-size:12px;line-height:12px;color:#1e3a5c;transform:scaleX(0.9383);transform-origin:left top;">Елементів: 65</div><div style="position:absolute;left:121px;top:690px;width:1px;height:15px;background:#f0f0f0"></div><div class="t" style="left:132.5px;top:691.54px;font-size:12px;line-height:12px;color:#1e3a5c;transform:scaleX(0.9756);transform-origin:left top;">Вибрано елементів: 1</div><div style="position:absolute;left:260px;top:690px;width:1px;height:15px;background:#f0f0f0"></div><div style="position:absolute;left:181px;top:115px;width:937px;height:571px;overflow:hidden;background:#fff"><div style="position:absolute;left:3px;top:321px;width:542px;height:20px;background:#d9d9d9"></div><svg style="position:absolute;left:9px;top:8px;" width="14" height="16" viewBox="0 0 14 16"><defs><linearGradient id="fg" x1="0" y1="0" x2="0" y2="1"><stop offset="0" stop-color="#fee9a4"/><stop offset="1" stop-color="#f9d774"/></linearGradient></defs><rect x="0.5" y="0.5" width="11" height="15" fill="url(#fg)" stroke="#ebc55c"/><rect x="9.5" y="9.5" width="3" height="6" fill="#fde49a" stroke="#e6be4e"/></svg><div class="t" style="left:25.69999999999999px;top:10.34px;font-size:12px;line-height:12px;color:#000;transform:scaleX(0.9128);transform-origin:left top;">Do-17Z_released V2+Ju-86E_byIES</div><svg style="position:absolute;left:9px;top:29px;" width="14" height="16" viewBox="0 0 14 16"><defs><linearGradient id="fg" x1="0" y1="0" x2="0" y2="1"><stop offset="0" stop-color="#fee9a4"/><stop offset="1" stop-color="#f9d774"/></linearGradient></defs><rect x="0.5" y="0.5" width="11" height="15" fill="url(#fg)" stroke="#ebc55c"/><rect x="9.5" y="9.5" width="3" height="6" fill="#fde49a" stroke="#e6be4e"/></svg><div class="t" style="left:25.69999999999999px;top:31.34px;font-size:12px;line-height:12px;color:#000;transform:scaleX(0.9434);transform-origin:left top;">EngineFlame_Full_Throttle_Mod_4.13.1</div><svg style="position:absolute;left:9px;top:50px;" width="14" height="16" viewBox="0 0 14 16"><defs><linearGradient id="fg" x1="0" y1="0" x2="0" y2="1"><stop offset="0" stop-color="#fee9a4"/><stop offset="1" stop-color="#f9d774"/></linearGradient></defs><rect x="0.5" y="0.5" width="11" height="15" fill="url(#fg)" stroke="#ebc55c"/><rect x="9.5" y="9.5" width="3" height="6" fill="#fde49a" stroke="#e6be4e"/></svg><div class="t" style="left:25.69999999999999px;top:52.34px;font-size:12px;line-height:12px;color:#000;transform:scaleX(0.9506);transform-origin:left top;">F4U Pack updated</div><svg style="position:absolute;left:9px;top:71px;" width="14" height="16" viewBox="0 0 14 16"><defs><linearGradient id="fg" x1="0" y1="0" x2="0" y2="1"><stop offset="0" stop-color="#fee9a4"/><stop offset="1" stop-color="#f9d774"/></linearGradient></defs><rect x="0.5" y="0.5" width="11" height="15" fill="url(#fg)" stroke="#ebc55c"/><rect x="9.5" y="9.5" width="3" height="6" fill="#fde49a" stroke="#e6be4e"/></svg><div class="t" style="left:25.69999999999999px;top:73.34px;font-size:12px;line-height:12px;color:#000;transform:scaleX(0.9205);transform-origin:left top;">F4U-1NEW_FM+</div><svg style="position:absolute;left:9px;top:92px;" width="14" height="16" viewBox="0 0 14 16"><defs><linearGradient id="fg" x1="0" y1="0" x2="0" y2="1"><stop offset="0" stop-color="#fee9a4"/><stop offset="1" stop-color="#f9d774"/></linearGradient></defs><rect x="0.5" y="0.5" width="11" height="15" fill="url(#fg)" stroke="#ebc55c"/><rect x="9.5" y="9.5" width="3" height="6" fill="#fde49a" stroke="#e6be4e"/></svg><div class="t" style="left:25.69999999999999px;top:94.34px;font-size:12px;line-height:12px;color:#000;transform:scaleX(0.9411);transform-origin:left top;">F4U-4+_late corsairs planes V2</div><svg style="position:absolute;left:9px;top:113px;" width="14" height="16" viewBox="0 0 14 16"><defs><linearGradient id="fg" x1="0" y1="0" x2="0" y2="1"><stop offset="0" stop-color="#fee9a4"/><stop offset="1" stop-color="#f9d774"/></linearGradient></defs><rect x="0.5" y="0.5" width="11" height="15" fill="url(#fg)" stroke="#ebc55c"/><rect x="9.5" y="9.5" width="3" height="6" fill="#fde49a" stroke="#e6be4e"/></svg><div class="t" style="left:25.69999999999999px;top:115.34px;font-size:12px;line-height:12px;color:#000;transform:scaleX(0.9058);transform-origin:left top;">F6F-6</div><svg style="position:absolute;left:9px;top:134px;" width="14" height="16" viewBox="0 0 14 16"><defs><linearGradient id="fg" x1="0" y1="0" x2="0" y2="1"><stop offset="0" stop-color="#fee9a4"/><stop offset="1" stop-color="#f9d774"/></linearGradient></defs><rect x="0.5" y="0.5" width="11" height="15" fill="url(#fg)" stroke="#ebc55c"/><rect x="9.5" y="9.5" width="3" height="6" fill="#fde49a" stroke="#e6be4e"/></svg><div class="t" style="left:25.69999999999999px;top:136.34px;font-size:12px;line-height:12px;color:#000;transform:scaleX(0.9841);transform-origin:left top;">Fix cockpit Pe-8</div><svg style="position:absolute;left:9px;top:155px;" width="14" height="16" viewBox="0 0 14 16"><defs><linearGradient id="fg" x1="0" y1="0" x2="0" y2="1"><stop offset="0" stop-color="#fee9a4"/><stop offset="1" stop-color="#f9d774"/></linearGradient></defs><rect x="0.5" y="0.5" width="11" height="15" fill="url(#fg)" stroke="#ebc55c"/><rect x="9.5" y="9.5" width="3" height="6" fill="#fde49a" stroke="#e6be4e"/></svg><div class="t" style="left:25.69999999999999px;top:157.34px;font-size:12px;line-height:12px;color:#000;transform:scaleX(0.9247);transform-origin:left top;">Flyable_R-10</div><svg style="position:absolute;left:9px;top:176px;" width="14" height="16" viewBox="0 0 14 16"><defs><linearGradient id="fg" x1="0" y1="0" x2="0" y2="1"><stop offset="0" stop-color="#fee9a4"/><stop offset="1" stop-color="#f9d774"/></linearGradient></defs><rect x="0.5" y="0.5" width="11" height="15" fill="url(#fg)" stroke="#ebc55c"/><rect x="9.5" y="9.5" width="3" height="6" fill="#fde49a" stroke="#e6be4e"/></svg><div class="t" style="left:25.69999999999999px;top:178.34px;font-size:12px;line-height:12px;color:#000;transform:scaleX(0.9295);transform-origin:left top;">Flyable_Su-2_NEW-AI</div><svg style="position:absolute;left:9px;top:197px;" width="14" height="16" viewBox="0 0 14 16"><defs><linearGradient id="fg" x1="0" y1="0" x2="0" y2="1"><stop offset="0" stop-color="#fee9a4"/><stop offset="1" stop-color="#f9d774"/></linearGradient></defs><rect x="0.5" y="0.5" width="11" height="15" fill="url(#fg)" stroke="#ebc55c"/><rect x="9.5" y="9.5" width="3" height="6" fill="#fde49a" stroke="#e6be4e"/></svg><div class="t" style="left:25.69999999999999px;top:199.34px;font-size:12px;line-height:12px;color:#000;transform:scaleX(0.9184);transform-origin:left top;">Gladiator_SeaGladiator_Pack_SAS</div><svg style="position:absolute;left:9px;top:218px;" width="14" height="16" viewBox="0 0 14 16"><defs><linearGradient id="fg" x1="0" y1="0" x2="0" y2="1"><stop offset="0" stop-color="#fee9a4"/><stop offset="1" stop-color="#f9d774"/></linearGradient></defs><rect x="0.5" y="0.5" width="11" height="15" fill="url(#fg)" stroke="#ebc55c"/><rect x="9.5" y="9.5" width="3" height="6" fill="#fde49a" stroke="#e6be4e"/></svg><div class="t" style="left:25.69999999999999px;top:220.34px;font-size:12px;line-height:12px;color:#000;transform:scaleX(0.9520);transform-origin:left top;">Gloster Guardian</div><svg style="position:absolute;left:9px;top:239px;" width="14" height="16" viewBox="0 0 14 16"><defs><linearGradient id="fg" x1="0" y1="0" x2="0" y2="1"><stop offset="0" stop-color="#fee9a4"/><stop offset="1" stop-color="#f9d774"/></linearGradient></defs><rect x="0.5" y="0.5" width="11" height="15" fill="url(#fg)" stroke="#ebc55c"/><rect x="9.5" y="9.5" width="3" height="6" fill="#fde49a" stroke="#e6be4e"/></svg><div class="t" style="left:25.69999999999999px;top:241.34px;font-size:12px;line-height:12px;color:#000;transform:scaleX(0.9213);transform-origin:left top;">Hawk-III_BF2C_v1.6</div><svg style="position:absolute;left:9px;top:260px;" width="14" height="16" viewBox="0 0 14 16"><defs><linearGradient id="fg" x1="0" y1="0" x2="0" y2="1"><stop offset="0" stop-color="#fee9a4"/><stop offset="1" stop-color="#f9d774"/></linearGradient></defs><rect x="0.5" y="0.5" width="11" height="15" fill="url(#fg)" stroke="#ebc55c"/><rect x="9.5" y="9.5" width="3" height="6" fill="#fde49a" stroke="#e6be4e"/></svg><div class="t" style="left:25.69999999999999px;top:262.34px;font-size:12px;line-height:12px;color:#000;transform:scaleX(0.9619);transform-origin:left top;">HURRICANE_ LVT-1+MkIIb_ModFilter+Koolhoven FK-58+Sea_HurricaneMkII+IID+IV+MKIIC-TROP</div><svg style="position:absolute;left:9px;top:281px;" width="14" height="16" viewBox="0 0 14 16"><defs><linearGradient id="fg" x1="0" y1="0" x2="0" y2="1"><stop offset="0" stop-color="#fee9a4"/><stop offset="1" stop-color="#f9d774"/></linearGradient></defs><rect x="0.5" y="0.5" width="11" height="15" fill="url(#fg)" stroke="#ebc55c"/><rect x="9.5" y="9.5" width="3" height="6" fill="#fde49a" stroke="#e6be4e"/></svg><div class="t" style="left:25.69999999999999px;top:283.34px;font-size:12px;line-height:12px;color:#000;transform:scaleX(0.8762);transform-origin:left top;">I_16NEW</div><svg style="position:absolute;left:9px;top:302px;" width="14" height="16" viewBox="0 0 14 16"><defs><linearGradient id="fg" x1="0" y1="0" x2="0" y2="1"><stop offset="0" stop-color="#fee9a4"/><stop offset="1" stop-color="#f9d774"/></linearGradient></defs><rect x="0.5" y="0.5" width="11" height="15" fill="url(#fg)" stroke="#ebc55c"/><rect x="9.5" y="9.5" width="3" height="6" fill="#fde49a" stroke="#e6be4e"/></svg><div class="t" style="left:25.69999999999999px;top:304.34px;font-size:12px;line-height:12px;color:#000;transform:scaleX(0.8821);transform-origin:left top;">I_153NEW_4.13.4</div><svg style="position:absolute;left:9px;top:323px;" width="14" height="16" viewBox="0 0 14 16"><defs><linearGradient id="fg" x1="0" y1="0" x2="0" y2="1"><stop offset="0" stop-color="#fee9a4"/><stop offset="1" stop-color="#f9d774"/></linearGradient></defs><rect x="0.5" y="0.5" width="11" height="15" fill="url(#fg)" stroke="#ebc55c"/><rect x="9.5" y="9.5" width="3" height="6" fill="#fde49a" stroke="#e6be4e"/></svg><div class="t" style="left:25.69999999999999px;top:325.34px;font-size:12px;line-height:12px;color:#000;transform:scaleX(0.8126);transform-origin:left top;">I_185_TEST</div><svg style="position:absolute;left:9px;top:344px;" width="14" height="16" viewBox="0 0 14 16"><defs><linearGradient id="fg" x1="0" y1="0" x2="0" y2="1"><stop offset="0" stop-color="#fee9a4"/><stop offset="1" stop-color="#f9d774"/></linearGradient></defs><rect x="0.5" y="0.5" width="11" height="15" fill="url(#fg)" stroke="#ebc55c"/><rect x="9.5" y="9.5" width="3" height="6" fill="#fde49a" stroke="#e6be4e"/></svg><div class="t" style="left:25.69999999999999px;top:346.34px;font-size:12px;line-height:12px;color:#000;transform:scaleX(0.8589);transform-origin:left top;">IAR_37_v1</div><svg style="position:absolute;left:9px;top:365px;" width="14" height="16" viewBox="0 0 14 16"><defs><linearGradient id="fg" x1="0" y1="0" x2="0" y2="1"><stop offset="0" stop-color="#fee9a4"/><stop offset="1" stop-color="#f9d774"/></linearGradient></defs><rect x="0.5" y="0.5" width="11" height="15" fill="url(#fg)" stroke="#ebc55c"/><rect x="9.5" y="9.5" width="3" height="6" fill="#fde49a" stroke="#e6be4e"/></svg><div class="t" style="left:25.69999999999999px;top:367.34px;font-size:12px;line-height:12px;color:#000;transform:scaleX(0.8790);transform-origin:left top;">IL-4_FOR_4.13.4</div><svg style="position:absolute;left:9px;top:386px;" width="14" height="16" viewBox="0 0 14 16"><defs><linearGradient id="fg" x1="0" y1="0" x2="0" y2="1"><stop offset="0" stop-color="#fee9a4"/><stop offset="1" stop-color="#f9d774"/></linearGradient></defs><rect x="0.5" y="0.5" width="11" height="15" fill="url(#fg)" stroke="#ebc55c"/><rect x="9.5" y="9.5" width="3" height="6" fill="#fde49a" stroke="#e6be4e"/></svg><div class="t" style="left:25.69999999999999px;top:388.34px;font-size:12px;line-height:12px;color:#000;transform:scaleX(0.9455);transform-origin:left top;">Kawanishi EMILI</div><svg style="position:absolute;left:9px;top:407px;" width="14" height="16" viewBox="0 0 14 16"><defs><linearGradient id="fg" x1="0" y1="0" x2="0" y2="1"><stop offset="0" stop-color="#fee9a4"/><stop offset="1" stop-color="#f9d774"/></linearGradient></defs><rect x="0.5" y="0.5" width="11" height="15" fill="url(#fg)" stroke="#ebc55c"/><rect x="9.5" y="9.5" width="3" height="6" fill="#fde49a" stroke="#e6be4e"/></svg><div class="t" style="left:25.69999999999999px;top:409.34px;font-size:12px;line-height:12px;color:#000;transform:scaleX(0.9172);transform-origin:left top;">Kawanishi J6K1 v3</div><svg style="position:absolute;left:9px;top:428px;" width="14" height="16" viewBox="0 0 14 16"><defs><linearGradient id="fg" x1="0" y1="0" x2="0" y2="1"><stop offset="0" stop-color="#fee9a4"/><stop offset="1" stop-color="#f9d774"/></linearGradient></defs><rect x="0.5" y="0.5" width="11" height="15" fill="url(#fg)" stroke="#ebc55c"/><rect x="9.5" y="9.5" width="3" height="6" fill="#fde49a" stroke="#e6be4e"/></svg><div class="t" style="left:25.69999999999999px;top:430.34px;font-size:12px;line-height:12px;color:#000;transform:scaleX(0.9569);transform-origin:left top;">Ki-43-II_Early+Ki-43-IIIb_Otsu</div><svg style="position:absolute;left:9px;top:449px;" width="14" height="16" viewBox="0 0 14 16"><defs><linearGradient id="fg" x1="0" y1="0" x2="0" y2="1"><stop offset="0" stop-color="#fee9a4"/><stop offset="1" stop-color="#f9d774"/></linearGradient></defs><rect x="0.5" y="0.5" width="11" height="15" fill="url(#fg)" stroke="#ebc55c"/><rect x="9.5" y="9.5" width="3" height="6" fill="#fde49a" stroke="#e6be4e"/></svg><div class="t" style="left:25.69999999999999px;top:451.34px;font-size:12px;line-height:12px;color:#000;transform:scaleX(0.9856);transform-origin:left top;">KI-43-I-II-III--3DO</div><svg style="position:absolute;left:9px;top:470px;" width="14" height="16" viewBox="0 0 14 16"><defs><linearGradient id="fg" x1="0" y1="0" x2="0" y2="1"><stop offset="0" stop-color="#fee9a4"/><stop offset="1" stop-color="#f9d774"/></linearGradient></defs><rect x="0.5" y="0.5" width="11" height="15" fill="url(#fg)" stroke="#ebc55c"/><rect x="9.5" y="9.5" width="3" height="6" fill="#fde49a" stroke="#e6be4e"/></svg><div class="t" style="left:25.69999999999999px;top:472.34px;font-size:12px;line-height:12px;color:#000;transform:scaleX(0.9695);transform-origin:left top;">MB-152</div><svg style="position:absolute;left:9px;top:491px;" width="14" height="16" viewBox="0 0 14 16"><defs><linearGradient id="fg" x1="0" y1="0" x2="0" y2="1"><stop offset="0" stop-color="#fee9a4"/><stop offset="1" stop-color="#f9d774"/></linearGradient></defs><rect x="0.5" y="0.5" width="11" height="15" fill="url(#fg)" stroke="#ebc55c"/><rect x="9.5" y="9.5" width="3" height="6" fill="#fde49a" stroke="#e6be4e"/></svg><div class="t" style="left:25.69999999999999px;top:493.34px;font-size:12px;line-height:12px;color:#000;transform:scaleX(0.9191);transform-origin:left top;">ME-210CA_4.13.4</div><svg style="position:absolute;left:9px;top:512px;" width="14" height="16" viewBox="0 0 14 16"><defs><linearGradient id="fg" x1="0" y1="0" x2="0" y2="1"><stop offset="0" stop-color="#fee9a4"/><stop offset="1" stop-color="#f9d774"/></linearGradient></defs><rect x="0.5" y="0.5" width="11" height="15" fill="url(#fg)" stroke="#ebc55c"/><rect x="9.5" y="9.5" width="3" height="6" fill="#fde49a" stroke="#e6be4e"/></svg><div class="t" style="left:25.69999999999999px;top:514.34px;font-size:12px;line-height:12px;color:#000;transform:scaleX(0.9315);transform-origin:left top;">P-39N-1_PLANE</div><svg style="position:absolute;left:9px;top:533px;" width="14" height="16" viewBox="0 0 14 16"><defs><linearGradient id="fg" x1="0" y1="0" x2="0" y2="1"><stop offset="0" stop-color="#fee9a4"/><stop offset="1" stop-color="#f9d774"/></linearGradient></defs><rect x="0.5" y="0.5" width="11" height="15" fill="url(#fg)" stroke="#ebc55c"/><rect x="9.5" y="9.5" width="3" height="6" fill="#fde49a" stroke="#e6be4e"/></svg><div class="t" style="left:25.69999999999999px;top:535.34px;font-size:12px;line-height:12px;color:#000;transform:scaleX(0.9397);transform-origin:left top;">P-39Q-30(Karabas)+</div><svg style="position:absolute;left:561px;top:8px;" width="14" height="16" viewBox="0 0 14 16"><defs><linearGradient id="fg" x1="0" y1="0" x2="0" y2="1"><stop offset="0" stop-color="#fee9a4"/><stop offset="1" stop-color="#f9d774"/></linearGradient></defs><rect x="0.5" y="0.5" width="11" height="15" fill="url(#fg)" stroke="#ebc55c"/><rect x="9.5" y="9.5" width="3" height="6" fill="#fde49a" stroke="#e6be4e"/></svg><div class="t" style="left:577px;top:10.34px;font-size:12px;line-height:12px;color:#000;transform:scaleX(0.9177);transform-origin:left top;">P-40_Lend-Lease_v2.2</div><svg style="position:absolute;left:561px;top:29px;" width="14" height="16" viewBox="0 0 14 16"><defs><linearGradient id="fg" x1="0" y1="0" x2="0" y2="1"><stop offset="0" stop-color="#fee9a4"/><stop offset="1" stop-color="#f9d774"/></linearGradient></defs><rect x="0.5" y="0.5" width="11" height="15" fill="url(#fg)" stroke="#ebc55c"/><rect x="9.5" y="9.5" width="3" height="6" fill="#fde49a" stroke="#e6be4e"/></svg><div class="t" style="left:577px;top:31.34px;font-size:12px;line-height:12px;color:#000;transform:scaleX(0.9370);transform-origin:left top;">P-40_New for 4.12 3DO</div><svg style="position:absolute;left:561px;top:50px;" width="14" height="16" viewBox="0 0 14 16"><defs><linearGradient id="fg" x1="0" y1="0" x2="0" y2="1"><stop offset="0" stop-color="#fee9a4"/><stop offset="1" stop-color="#f9d774"/></linearGradient></defs><rect x="0.5" y="0.5" width="11" height="15" fill="url(#fg)" stroke="#ebc55c"/><rect x="9.5" y="9.5" width="3" height="6" fill="#fde49a" stroke="#e6be4e"/></svg><div class="t" style="left:577px;top:52.34px;font-size:12px;line-height:12px;color:#000;transform:scaleX(0.9620);transform-origin:left top;">P-40N-5NEW--4.13.4</div><svg style="position:absolute;left:561px;top:71px;" width="14" height="16" viewBox="0 0 14 16"><defs><linearGradient id="fg" x1="0" y1="0" x2="0" y2="1"><stop offset="0" stop-color="#fee9a4"/><stop offset="1" stop-color="#f9d774"/></linearGradient></defs><rect x="0.5" y="0.5" width="11" height="15" fill="url(#fg)" stroke="#ebc55c"/><rect x="9.5" y="9.5" width="3" height="6" fill="#fde49a" stroke="#e6be4e"/></svg><div class="t" style="left:577px;top:73.34px;font-size:12px;line-height:12px;color:#000;transform:scaleX(0.9472);transform-origin:left top;">P-40NEW--4.13.4</div><svg style="position:absolute;left:561px;top:92px;" width="14" height="16" viewBox="0 0 14 16"><defs><linearGradient id="fg" x1="0" y1="0" x2="0" y2="1"><stop offset="0" stop-color="#fee9a4"/><stop offset="1" stop-color="#f9d774"/></linearGradient></defs><rect x="0.5" y="0.5" width="11" height="15" fill="url(#fg)" stroke="#ebc55c"/><rect x="9.5" y="9.5" width="3" height="6" fill="#fde49a" stroke="#e6be4e"/></svg><div class="t" style="left:577px;top:94.34px;font-size:12px;line-height:12px;color:#000;transform:scaleX(0.9260);transform-origin:left top;">P-51D</div><svg style="position:absolute;left:561px;top:113px;" width="14" height="16" viewBox="0 0 14 16"><defs><linearGradient id="fg" x1="0" y1="0" x2="0" y2="1"><stop offset="0" stop-color="#fee9a4"/><stop offset="1" stop-color="#f9d774"/></linearGradient></defs><rect x="0.5" y="0.5" width="11" height="15" fill="url(#fg)" stroke="#ebc55c"/><rect x="9.5" y="9.5" width="3" height="6" fill="#fde49a" stroke="#e6be4e"/></svg><div class="t" style="left:577px;top:115.34px;font-size:12px;line-height:12px;color:#000;transform:scaleX(0.9550);transform-origin:left top;">P-51D-5Ealry_NoFillet_NewSlot_newFM</div><svg style="position:absolute;left:561px;top:134px;" width="14" height="16" viewBox="0 0 14 16"><defs><linearGradient id="fg" x1="0" y1="0" x2="0" y2="1"><stop offset="0" stop-color="#fee9a4"/><stop offset="1" stop-color="#f9d774"/></linearGradient></defs><rect x="0.5" y="0.5" width="11" height="15" fill="url(#fg)" stroke="#ebc55c"/><rect x="9.5" y="9.5" width="3" height="6" fill="#fde49a" stroke="#e6be4e"/></svg><div class="t" style="left:577px;top:136.34px;font-size:12px;line-height:12px;color:#000;transform:scaleX(0.9369);transform-origin:left top;">PolPack I16 Cutouts SAS v2</div><svg style="position:absolute;left:561px;top:155px;" width="14" height="16" viewBox="0 0 14 16"><defs><linearGradient id="fg" x1="0" y1="0" x2="0" y2="1"><stop offset="0" stop-color="#fee9a4"/><stop offset="1" stop-color="#f9d774"/></linearGradient></defs><rect x="0.5" y="0.5" width="11" height="15" fill="url(#fg)" stroke="#ebc55c"/><rect x="9.5" y="9.5" width="3" height="6" fill="#fde49a" stroke="#e6be4e"/></svg><div class="t" style="left:577px;top:157.34px;font-size:12px;line-height:12px;color:#000;transform:scaleX(0.9644);transform-origin:left top;">Screenshot_Mod</div><svg style="position:absolute;left:561px;top:176px;" width="14" height="16" viewBox="0 0 14 16"><defs><linearGradient id="fg" x1="0" y1="0" x2="0" y2="1"><stop offset="0" stop-color="#fee9a4"/><stop offset="1" stop-color="#f9d774"/></linearGradient></defs><rect x="0.5" y="0.5" width="11" height="15" fill="url(#fg)" stroke="#ebc55c"/><rect x="9.5" y="9.5" width="3" height="6" fill="#fde49a" stroke="#e6be4e"/></svg><div class="t" style="left:577px;top:178.34px;font-size:12px;line-height:12px;color:#000;transform:scaleX(0.9446);transform-origin:left top;">Sun.class_Mod</div><svg style="position:absolute;left:561px;top:197px;" width="14" height="16" viewBox="0 0 14 16"><defs><linearGradient id="fg" x1="0" y1="0" x2="0" y2="1"><stop offset="0" stop-color="#fee9a4"/><stop offset="1" stop-color="#f9d774"/></linearGradient></defs><rect x="0.5" y="0.5" width="11" height="15" fill="url(#fg)" stroke="#ebc55c"/><rect x="9.5" y="9.5" width="3" height="6" fill="#fde49a" stroke="#e6be4e"/></svg><div class="t" style="left:577px;top:199.34px;font-size:12px;line-height:12px;color:#000;transform:scaleX(0.9129);transform-origin:left top;">TB-3</div><svg style="position:absolute;left:561px;top:218px;" width="14" height="16" viewBox="0 0 14 16"><defs><linearGradient id="fg" x1="0" y1="0" x2="0" y2="1"><stop offset="0" stop-color="#fee9a4"/><stop offset="1" stop-color="#f9d774"/></linearGradient></defs><rect x="0.5" y="0.5" width="11" height="15" fill="url(#fg)" stroke="#ebc55c"/><rect x="9.5" y="9.5" width="3" height="6" fill="#fde49a" stroke="#e6be4e"/></svg><div class="t" style="left:577px;top:220.34px;font-size:12px;line-height:12px;color:#000;transform:scaleX(0.8647);transform-origin:left top;">TORPEDO_4.13.4</div><svg style="position:absolute;left:561px;top:239px;" width="14" height="16" viewBox="0 0 14 16"><defs><linearGradient id="fg" x1="0" y1="0" x2="0" y2="1"><stop offset="0" stop-color="#fee9a4"/><stop offset="1" stop-color="#f9d774"/></linearGradient></defs><rect x="0.5" y="0.5" width="11" height="15" fill="url(#fg)" stroke="#ebc55c"/><rect x="9.5" y="9.5" width="3" height="6" fill="#fde49a" stroke="#e6be4e"/></svg><div class="t" style="left:577px;top:241.34px;font-size:12px;line-height:12px;color:#000;transform:scaleX(0.9044);transform-origin:left top;">US_WW2_Arms_4.12+</div><svg style="position:absolute;left:561px;top:260px;" width="14" height="16" viewBox="0 0 14 16"><defs><linearGradient id="fg" x1="0" y1="0" x2="0" y2="1"><stop offset="0" stop-color="#fee9a4"/><stop offset="1" stop-color="#f9d774"/></linearGradient></defs><rect x="0.5" y="0.5" width="11" height="15" fill="url(#fg)" stroke="#ebc55c"/><rect x="9.5" y="9.5" width="3" height="6" fill="#fde49a" stroke="#e6be4e"/></svg><div class="t" style="left:577px;top:262.34px;font-size:12px;line-height:12px;color:#000;transform:scaleX(0.9180);transform-origin:left top;">Yak-3_Barnesy</div><div style="position:absolute;left:3px;top:555px;width:937px;height:16px;background:#f0f0f0"></div><div style="position:absolute;left:321px;top:555px;width:300px;height:15px;background:#cdcdcd"></div><svg style="position:absolute;left:7px;top:559px;" width="6" height="8" viewBox="0 0 6 8"><path d="M5 0.8 L1.5 3.8 L5 6.8" fill="none" stroke="#606060" stroke-width="1.8"/></svg></div><svg style="position:absolute;left:182px;top:457px;" width="96" height="4" viewBox="0 0 96 4"><path d="M0 2.5 L95 2.2" stroke="#f25a3c" stroke-width="2.1"/></svg><svg style="position:absolute;left:465px;top:105px;" width="118" height="3" viewBox="0 0 118 3"><path d="M0 1.5 H117" stroke="#4b3bf2" stroke-width="2.2"/></svg><svg style="position:absolute;left:601px;top:105px;" width="39" height="3" viewBox="0 0 39 3"><path d="M0 1.5 H38" stroke="#4b3bf2" stroke-width="2.2"/></svg><div style="position:absolute;left:1022px;top:20px;width:899px;height:702px;background:#fff;border:1px solid #1c2b5c;box-sizing:border-box;box-shadow:0 4px 16px rgba(0,0,0,0.28),0 0 6px rgba(0,0,0,0.12)"></div><div style="position:absolute;left:1023px;top:20px;width:897px;height:31px;background:#1c2b5c"></div><svg style="position:absolute;left:1033px;top:27px;" width="14" height="16" viewBox="0 0 14 16"><defs><linearGradient id="fg" x1="0" y1="0" x2="0" y2="1"><stop offset="0" stop-color="#fee9a4"/><stop offset="1" stop-color="#f9d774"/></linearGradient></defs><rect x="0.5" y="0.5" width="11" height="15" fill="url(#fg)" stroke="#ebc55c"/><rect x="9.5" y="9.5" width="3" height="6" fill="#fde49a" stroke="#e6be4e"/></svg><div class="t" style="left:1051px;top:29.84px;font-size:12px;line-height:12px;color:#ffffff;transform:scaleX(0.8163);transform-origin:left top;">I_185_TEST</div><div style="position:absolute;left:1023px;top:51px;width:897px;height:23px;background:#fff"></div><div style="position:absolute;left:1023px;top:74px;width:897px;height:1px;background:#dadbdc"></div><div style="position:absolute;left:1023px;top:51px;width:56px;height:23px;background:#1f4aa2"></div><div class="t" style="left:1037.75px;top:57.84px;font-size:12px;line-height:12px;color:#fff;transform:scaleX(0.8978);transform-origin:left top;">Файл</div><div class="t" style="left:1093.5px;top:57.84px;font-size:12px;line-height:12px;color:#2b2b2b;transform:scaleX(0.9521);transform-origin:left top;">Основне</div><div class="t" style="left:1169.5px;top:57.84px;font-size:12px;line-height:12px;color:#2b2b2b;transform:scaleX(0.9429);transform-origin:left top;">Спільний доступ</div><div class="t" style="left:1286.5px;top:57.84px;font-size:12px;line-height:12px;color:#2b2b2b;transform:scaleX(0.9027);transform-origin:left top;">Вигляд</div><div style="position:absolute;left:1023px;top:99px;width:897px;height:1px;background:#e3e4e5"></div><svg style="position:absolute;left:1030px;top:79px;" width="12" height="16" viewBox="0 0 12 16"><path d="M0.5 0.5 H8 L11.5 4 V15.5 H0.5 Z" fill="#f3f3f3" stroke="#7a7a7a"/><path d="M8 0.5 V4 H11.5" fill="none" stroke="#9a9a9a"/><path d="M2.5 8.5 L5 11 L9.5 5.5" fill="none" stroke="#e2572b" stroke-width="1.5"/></svg><svg style="position:absolute;left:1052px;top:79px;" width="14" height="16" viewBox="0 0 14 16"><defs><linearGradient id="fg" x1="0" y1="0" x2="0" y2="1"><stop offset="0" stop-color="#fee9a4"/><stop offset="1" stop-color="#f9d774"/></linearGradient></defs><rect x="0.5" y="0.5" width="11" height="15" fill="url(#fg)" stroke="#ebc55c"/><rect x="9.5" y="9.5" width="3" height="6" fill="#fde49a" stroke="#e6be4e"/></svg><svg style="position:absolute;left:1073px;top:79px;" width="14" height="16" viewBox="0 0 14 16"><path d="M1 3 V8 H6" fill="none" stroke="#8ea3c9" stroke-width="2.2"/><path d="M1.5 7.5 Q6 2 10.5 4.5 Q14 8 6 14.5" fill="none" stroke="#8ea3c9" stroke-width="2.6"/></svg><svg style="position:absolute;left:1091px;top:76px;" width="22" height="22" viewBox="0 0 22 22"><rect x="0.5" y="0.5" width="21" height="21" rx="2.5" fill="#fdfeff" stroke="#8fb0d8"/><rect x="4.5" y="3.5" width="11" height="15" fill="#f7f7f7" stroke="#9a9a9a"/><path d="M6 6 H14 M6 8.2 H14 M6 10.4 H14 M6 12.6 H14 M6 14.8 H14" stroke="#b8d0e8" stroke-width="1"/><path d="M18 4 V18 M16.5 5.5 L18 3.5 L19.5 5.5 M16.5 16.5 L18 18.5 L19.5 16.5" fill="none" stroke="#3b7cc9" stroke-width="1.2"/></svg><svg style="position:absolute;left:1120px;top:85px;" width="8" height="7" viewBox="0 0 8 7"><rect x="0" y="0" width="8" height="1.6" fill="#111"/><path d="M0.5 3 H7.5 L4 6.5 Z" fill="#111"/></svg><svg style="position:absolute;left:1036px;top:112px;" width="12" height="11" viewBox="0 0 12 11"><path d="M11.5 5 H1.5 M5.5 1 L1.2 5 L5.5 9" fill="none" stroke="#6e6e6e" stroke-width="1.7"/></svg><svg style="position:absolute;left:1066px;top:112px;" width="12" height="11" viewBox="0 0 12 11"><path d="M0.5 5 H10.5 M6.5 1 L10.8 5 L6.5 9" fill="none" stroke="#cfcfcf" stroke-width="1.7"/></svg><svg style="position:absolute;left:1092px;top:114px;" width="8" height="5" viewBox="0 0 8 5"><path d="M0.7 0.7 L3.5 3.5 L6.3 0.7" fill="none" stroke="#8a8a8a" stroke-width="1.4"/></svg><svg style="position:absolute;left:1110px;top:111px;" width="12" height="12" viewBox="0 0 12 12"><path d="M6 12 V1.5 M1 6.2 L6 1.2 L11 6.2" fill="none" stroke="#6e6e6e" stroke-width="1.7"/></svg><div style="position:absolute;left:1129px;top:106px;width:763px;height:22px;background:#fff;border:1px solid #d9d9d9;box-sizing:border-box"></div><div style="position:absolute;left:1874px;top:106px;width:1px;height:22px;background:#e3e3e3"></div><svg style="position:absolute;left:1134px;top:108px;" width="14" height="16" viewBox="0 0 14 16"><defs><linearGradient id="fg" x1="0" y1="0" x2="0" y2="1"><stop offset="0" stop-color="#fee9a4"/><stop offset="1" stop-color="#f9d774"/></linearGradient></defs><rect x="0.5" y="0.5" width="11" height="15" fill="url(#fg)" stroke="#ebc55c"/><rect x="9.5" y="9.5" width="3" height="6" fill="#fde49a" stroke="#e6be4e"/></svg><svg style="position:absolute;left:1861px;top:114px;" width="11" height="7" viewBox="0 0 11 7"><path d="M1 1 L5.3 5.3 L9.6 1" fill="none" stroke="#6a6a6a" stroke-width="1.5"/></svg><svg style="position:absolute;left:1878px;top:110px;" width="12" height="13" viewBox="0 0 12 13"><path d="M9.5 5.5 A4.5 4.5 0 1 1 6 2.2" fill="none" stroke="#7a7a7a" stroke-width="1.5"/><path d="M5 0 L8.5 2.3 L5 4.6 Z" fill="#7a7a7a"/></svg><svg style="position:absolute;left:1155px;top:113.5px;" width="5" height="8" viewBox="0 0 5 8"><path d="M0.8 0.8 L4 4 L0.8 7.2" fill="none" stroke="#5f5f5f" stroke-width="1.3"/></svg><div class="t" style="left:1169.4px;top:110.84px;font-size:12px;line-height:12px;color:#000;transform:scaleX(0.9854);transform-origin:left top;">Цей ПК</div><svg style="position:absolute;left:1219px;top:113.5px;" width="5" height="8" viewBox="0 0 5 8"><path d="M0.8 0.8 L4 4 L0.8 7.2" fill="none" stroke="#5f5f5f" stroke-width="1.3"/></svg><div class="t" style="left:1233px;top:110.84px;font-size:12px;line-height:12px;color:#000;transform:scaleX(0.9961);transform-origin:left top;">Локальний диск (H:)</div><svg style="position:absolute;left:1354.4px;top:113.5px;" width="5" height="8" viewBox="0 0 5 8"><path d="M0.8 0.8 L4 4 L0.8 7.2" fill="none" stroke="#5f5f5f" stroke-width="1.3"/></svg><div class="t" style="left:1368.6px;top:110.84px;font-size:12px;line-height:12px;color:#000;transform:scaleX(0.9640);transform-origin:left top;">Program Files</div><svg style="position:absolute;left:1449px;top:113.5px;" width="5" height="8" viewBox="0 0 5 8"><path d="M0.8 0.8 L4 4 L0.8 7.2" fill="none" stroke="#5f5f5f" stroke-width="1.3"/></svg><div class="t" style="left:1463px;top:110.84px;font-size:12px;line-height:12px;color:#000;transform:scaleX(0.9965);transform-origin:left top;">IL-2 Complete Edition</div><svg style="position:absolute;left:1587px;top:113.5px;" width="5" height="8" viewBox="0 0 5 8"><path d="M0.8 0.8 L4 4 L0.8 7.2" fill="none" stroke="#5f5f5f" stroke-width="1.3"/></svg><div class="t" style="left:1601px;top:110.84px;font-size:12px;line-height:12px;color:#000;transform:scaleX(0.9444);transform-origin:left top;">MODS</div><svg style="position:absolute;left:1643px;top:113.5px;" width="5" height="8" viewBox="0 0 5 8"><path d="M0.8 0.8 L4 4 L0.8 7.2" fill="none" stroke="#5f5f5f" stroke-width="1.3"/></svg><div class="t" style="left:1658px;top:110.84px;font-size:12px;line-height:12px;color:#000;transform:scaleX(0.8163);transform-origin:left top;">I_185_TEST</div><div style="position:absolute;left:1904px;top:106px;width:300px;height:22px;background:#fff;border:1px solid #d9d9d9;box-sizing:border-box"></div><div class="t" style="left:1913.6px;top:110.84px;font-size:12px;line-height:12px;color:#6d6d6d;transform:scaleX(0.9893);transform-origin:left top;">Пошук: MODS</div><div style="position:absolute;left:1023px;top:135px;width:140px;height:564px;overflow:hidden;background:#fff"><div style="position:absolute;left:0px;top:208px;width:139px;height:24px;background:#d9d9d9"></div><svg style="position:absolute;left:25px;top:13px;" width="16" height="16" viewBox="0 0 16 16"><path d="M10 0.5 L11.6 4.8 L15.8 4.6 L12.6 7.8 L13.6 12.5 L9.6 10.2 L5.8 12.6 L6.8 8.2 L3.6 5.2 L8 4.9 Z" fill="#2a95e6" transform="rotate(8 10 7)"/><path d="M0.5 6.5 L4.5 5.5 M1 9.5 L5 8.5 M2 12.5 L5.5 11" stroke="#5ab0ee" stroke-width="1.1"/></svg><div class="t" style="left:45px;top:13.84px;font-size:12px;line-height:12px;color:#000;">Швидкий доступ</div><svg style="position:absolute;left:32px;top:38px;" width="16" height="12" viewBox="0 0 16 12"><defs><linearGradient id="dg" x1="0" y1="0" x2="1" y2="1"><stop offset="0" stop-color="#3db0fb"/><stop offset="1" stop-color="#1c86ee"/></linearGradient></defs><rect x="0" y="0" width="16" height="12" fill="#1466c4"/><rect x="1" y="1" width="14" height="9.2" fill="url(#dg)"/><rect x="1.5" y="10.4" width="1.2" height="1" fill="#fff"/><rect x="11.8" y="10.4" width="1.2" height="1" fill="#fff"/><rect x="13.6" y="10.4" width="1.2" height="1" fill="#fff"/></svg><div class="t" style="left:53px;top:37.84px;font-size:12px;line-height:12px;color:#000;width:70px;overflow:hidden;">Робочий стіл</div><svg style="position:absolute;left:126px;top:38px;" width="11" height="11" viewBox="0 0 11 11"><path d="M6 0.5 L10.5 5 L9 6 L7.5 5.5 L5.5 7.5 L6 9.5 L5 10.5 L0.5 6 L1.5 5 L3.5 5.5 L5.5 3.5 L5 2 Z" fill="#9aa0a6"/><path d="M2.5 8.5 L0 11" stroke="#9aa0a6" stroke-width="1.2"/></svg><svg style="position:absolute;left:32px;top:60px;" width="16" height="16" viewBox="0 0 16 16"><path d="M5.5 0 H10.5 V8 H15 L8 15.5 L1 8 H5.5 Z" fill="#3b8ede"/><path d="M8 0 H10.5 V8 H15 L8 15.5 Z" fill="#2a73c5"/></svg><div class="t" style="left:53px;top:61.84px;font-size:12px;line-height:12px;color:#000;width:70px;overflow:hidden;">Завантаження</div><svg style="position:absolute;left:126px;top:62px;" width="11" height="11" viewBox="0 0 11 11"><path d="M6 0.5 L10.5 5 L9 6 L7.5 5.5 L5.5 7.5 L6 9.5 L5 10.5 L0.5 6 L1.5 5 L3.5 5.5 L5.5 3.5 L5 2 Z" fill="#9aa0a6"/><path d="M2.5 8.5 L0 11" stroke="#9aa0a6" stroke-width="1.2"/></svg><svg style="position:absolute;left:33px;top:84px;" width="13" height="16" viewBox="0 0 13 16"><path d="M0.5 0.5 H9 L12.5 4 V15.5 H0.5 Z" fill="#fafafa" stroke="#8a8a8a"/><path d="M3 4 H7 M3 6.5 H10 M3 9 H10 M3 11.5 H10" stroke="#3c8fdc" stroke-width="1.2"/><rect x="3" y="2" width="3" height="2" fill="#3c8fdc"/></svg><div class="t" style="left:53px;top:85.84px;font-size:12px;line-height:12px;color:#000;width:70px;overflow:hidden;">Документи</div><svg style="position:absolute;left:126px;top:86px;" width="11" height="11" viewBox="0 0 11 11"><path d="M6 0.5 L10.5 5 L9 6 L7.5 5.5 L5.5 7.5 L6 9.5 L5 10.5 L0.5 6 L1.5 5 L3.5 5.5 L5.5 3.5 L5 2 Z" fill="#9aa0a6"/><path d="M2.5 8.5 L0 11" stroke="#9aa0a6" stroke-width="1.2"/></svg><svg style="position:absolute;left:32px;top:110px;" width="16" height="13" viewBox="0 0 16 13"><rect x="0.5" y="0.5" width="15" height="12" fill="#f4f4f4" stroke="#8a8a8a"/><rect x="2" y="2" width="12" height="9" fill="#bfe0f5"/><path d="M2 9 Q6 5 9 8 Q11 6.5 14 8 V11 H2 Z" fill="#3f8a5a"/></svg><div class="t" style="left:53px;top:109.84px;font-size:12px;line-height:12px;color:#000;width:70px;overflow:hidden;">Зображення</div><svg style="position:absolute;left:126px;top:110px;" width="11" height="11" viewBox="0 0 11 11"><path d="M6 0.5 L10.5 5 L9 6 L7.5 5.5 L5.5 7.5 L6 9.5 L5 10.5 L0.5 6 L1.5 5 L3.5 5.5 L5.5 3.5 L5 2 Z" fill="#9aa0a6"/><path d="M2.5 8.5 L0 11" stroke="#9aa0a6" stroke-width="1.2"/></svg><svg style="position:absolute;left:24px;top:142px;" width="16" height="12" viewBox="0 0 16 12"><defs><linearGradient id="dg" x1="0" y1="0" x2="1" y2="1"><stop offset="0" stop-color="#3db0fb"/><stop offset="1" stop-color="#1c86ee"/></linearGradient></defs><rect x="0" y="0" width="16" height="12" fill="#1466c4"/><rect x="1" y="1" width="14" height="9.2" fill="url(#dg)"/><rect x="1.5" y="10.4" width="1.2" height="1" fill="#fff"/><rect x="11.8" y="10.4" width="1.2" height="1" fill="#fff"/><rect x="13.6" y="10.4" width="1.2" height="1" fill="#fff"/></svg><div class="t" style="left:45px;top:141.84px;font-size:12px;line-height:12px;color:#000;">Робочий стіл</div><svg style="position:absolute;left:32px;top:166px;" width="17" height="11" viewBox="0 0 17 11"><path d="M3.5 10.5 A3.3 3.3 0 0 1 3 4 A5 5 0 0 1 12 3.2 A3.6 3.6 0 0 1 13.5 10.5 Z" fill="#1d6fc8"/><path d="M2 10.5 Q1 7 5 6.6 Q8 5 10 7 Q16 6 16.5 10.5 Z" fill="#2a8ce6"/></svg><div class="t" style="left:53px;top:165.84px;font-size:12px;line-height:12px;color:#000;">OneDrive</div><svg style="position:absolute;left:33px;top:188px;" width="14" height="16" viewBox="0 0 14 16"><path d="M0.5 15.5 Q0.5 9.5 7 9.5 Q13.5 9.5 13.5 15.5 Z" fill="#3b8a5a"/><circle cx="7" cy="5" r="4" fill="#a07050"/><path d="M3 4 Q4 0 7.5 0.8 Q11 1 11 4.5 Q9 2.5 3 4 Z" fill="#333"/></svg><div class="t" style="left:53px;top:189.84px;font-size:12px;line-height:12px;color:#000;">Василь</div><svg style="position:absolute;left:32px;top:213px;" width="16" height="16" viewBox="0 0 16 16"><rect x="0.5" y="0.5" width="15" height="10" fill="#56b4f5" stroke="#2a7cc4"/><rect x="1.5" y="1.5" width="13" height="8" fill="#7dc8fb"/><rect x="4" y="12" width="8" height="1" fill="#5f8fbf"/><rect x="0" y="14.5" width="16" height="1.2" fill="#7fa6cf"/></svg><div class="t" style="left:53px;top:213.84px;font-size:12px;line-height:12px;color:#000;">Цей ПК</div><svg style="position:absolute;left:32px;top:237px;" width="16" height="14" viewBox="0 0 16 14"><path d="M0 0.5 H6 L7.5 2 H8 V3.5 H0 Z" fill="#e9a51e"/><rect x="0" y="3" width="16" height="11" fill="#fbd462"/><path d="M3.5 14 V8 Q3.5 6.8 4.7 6.8 H11.3 Q12.5 6.8 12.5 8 V14 H10 V10 H6 V14 Z" fill="#2d7fd6"/></svg><div class="t" style="left:53px;top:237.84px;font-size:12px;line-height:12px;color:#000;">Бібліотеки</div><svg style="position:absolute;left:40px;top:260px;" width="16" height="15" viewBox="0 0 16 15"><rect x="3" y="0" width="10" height="12" fill="#333"/><rect x="5" y="1.5" width="6" height="4" fill="#c07040"/><rect x="5" y="6.5" width="6" height="4" fill="#4a7ab0"/><path d="M3.8 1 V11 M12.2 1 V11" stroke="#aaa" stroke-width="1" stroke-dasharray="1 1"/><path d="M0 14 H16" stroke="#3c9be8" stroke-width="2"/></svg><div class="t" style="left:61px;top:261.84px;font-size:12px;line-height:12px;color:#000;">Відео</div><svg style="position:absolute;left:41px;top:284px;" width="16" height="16" viewBox="0 0 16 16"><path d="M2.5 0.5 H10 L13.5 4 V13 H2.5 Z" fill="#fafafa" stroke="#8a8a8a"/><path d="M5 5 H11 M5 7.5 H11 M5 10 H11" stroke="#3c8fdc" stroke-width="1.2"/><path d="M0 15 H16" stroke="#3c9be8" stroke-width="2"/></svg><div class="t" style="left:61px;top:285.84px;font-size:12px;line-height:12px;color:#000;">Документи</div><svg style="position:absolute;left:40px;top:309px;" width="16" height="15" viewBox="0 0 16 15"><rect x="1.5" y="1.5" width="13" height="10" fill="#f4f4f4" stroke="#7a8a9a"/><rect x="3" y="3" width="10" height="7" fill="#bfe0f5"/><path d="M3 9 Q6 6 8 8 Q10 6.5 13 8 V10 H3 Z" fill="#3f8a5a"/><path d="M0 14 H16" stroke="#3c9be8" stroke-width="2"/></svg><div class="t" style="left:61px;top:309.84px;font-size:12px;line-height:12px;color:#000;">Збережені зображення</div><svg style="position:absolute;left:40px;top:333px;" width="16" height="15" viewBox="0 0 16 15"><rect x="1.5" y="1.5" width="13" height="10" fill="#f4f4f4" stroke="#7a8a9a"/><rect x="3" y="3" width="10" height="7" fill="#bfe0f5"/><path d="M3 9 Q6 6 8 8 Q10 6.5 13 8 V10 H3 Z" fill="#3f8a5a"/><path d="M0 14 H16" stroke="#3c9be8" stroke-width="2"/></svg><div class="t" style="left:61px;top:333.84px;font-size:12px;line-height:12px;color:#000;">Зображення</div><svg style="position:absolute;left:40px;top:355px;" width="16" height="16" viewBox="0 0 16 16"><path d="M8 0.5 V10" stroke="#2e8fe0" stroke-width="1.8"/><path d="M8 1 Q12 3 12 6 Q11 4 8.5 4" fill="#2e8fe0"/><ellipse cx="5.8" cy="10.5" rx="3" ry="2.4" fill="#2e8fe0"/><path d="M0 15 H16" stroke="#3c9be8" stroke-width="2"/></svg><div class="t" style="left:61px;top:357.84px;font-size:12px;line-height:12px;color:#000;">Музика</div><svg style="position:absolute;left:40px;top:381px;" width="16" height="15" viewBox="0 0 16 15"><rect x="1.5" y="1.5" width="13" height="10" fill="#f4f4f4" stroke="#7a8a9a"/><rect x="3" y="3" width="10" height="7" fill="#bfe0f5"/><path d="M3 9 Q6 6 8 8 Q10 6.5 13 8 V10 H3 Z" fill="#3f8a5a"/><path d="M0 14 H16" stroke="#3c9be8" stroke-width="2"/></svg><div class="t" style="left:61px;top:381.84px;font-size:12px;line-height:12px;color:#000;">Фотографії з камери</div><svg style="position:absolute;left:32px;top:403px;" width="16" height="16" viewBox="0 0 16 16"><rect x="0.5" y="4.5" width="11" height="8" fill="#4aa8f0" stroke="#2a78c0"/><path d="M6 12.5 V14.5 M3 15 H9" stroke="#2a78c0"/><circle cx="11" cy="5" r="4.5" fill="#3d9de8"/><path d="M8 3 Q11 1 13 4 Q12 7 10 6 Z" fill="#7fd06a"/></svg><div class="t" style="left:53px;top:405.84px;font-size:12px;line-height:12px;color:#000;">Мережа</div><svg style="position:absolute;left:32px;top:430px;" width="16" height="13" viewBox="0 0 16 13"><rect x="0.5" y="0.5" width="15" height="12" fill="#d6ecff" stroke="#2a7cc4"/><rect x="2" y="2.5" width="5" height="4" fill="#3c8fdc"/><rect x="8.5" y="2.5" width="5" height="2" fill="#f0a030"/><rect x="8.5" y="6" width="5" height="2" fill="#3c8fdc"/><rect x="2" y="8" width="5" height="2" fill="#3c8fdc"/></svg><div class="t" style="left:53px;top:429.84px;font-size:12px;line-height:12px;color:#000;">Панель керування</div><svg style="position:absolute;left:33px;top:452px;" width="14" height="16" viewBox="0 0 14 16"><path d="M1 2.5 H13 L12 15.5 H2 Z" fill="#e6e9ec" stroke="#9aa2aa"/><rect x="0.5" y="1" width="13" height="2" fill="#cfd4d9" stroke="#9aa2aa" stroke-width="0.6"/><path d="M5 11 L7 7.5 L9 11 Z" fill="none" stroke="#2e7fd0" stroke-width="1.3"/></svg><div class="t" style="left:53px;top:453.84px;font-size:12px;line-height:12px;color:#000;">Кошик</div><svg style="position:absolute;left:34px;top:476px;" width="14" height="16" viewBox="0 0 14 16"><defs><linearGradient id="fg" x1="0" y1="0" x2="0" y2="1"><stop offset="0" stop-color="#fee9a4"/><stop offset="1" stop-color="#f9d774"/></linearGradient></defs><rect x="0.5" y="0.5" width="11" height="15" fill="url(#fg)" stroke="#ebc55c"/><rect x="9.5" y="9.5" width="3" height="6" fill="#fde49a" stroke="#e6be4e"/></svg><div class="t" style="left:53px;top:477.84px;font-size:12px;line-height:12px;color:#000;">FlightModels</div><svg style="position:absolute;left:42px;top:500px;" width="14" height="16" viewBox="0 0 14 16"><defs><linearGradient id="fg" x1="0" y1="0" x2="0" y2="1"><stop offset="0" stop-color="#fee9a4"/><stop offset="1" stop-color="#f9d774"/></linearGradient></defs><rect x="0.5" y="0.5" width="11" height="15" fill="url(#fg)" stroke="#ebc55c"/><rect x="9.5" y="9.5" width="3" height="6" fill="#fde49a" stroke="#e6be4e"/></svg><div class="t" style="left:61px;top:501.84px;font-size:12px;line-height:12px;color:#000;">FlightModels – Copy</div><svg style="position:absolute;left:42px;top:524px;" width="14" height="16" viewBox="0 0 14 16"><defs><linearGradient id="fg" x1="0" y1="0" x2="0" y2="1"><stop offset="0" stop-color="#fee9a4"/><stop offset="1" stop-color="#f9d774"/></linearGradient></defs><rect x="0.5" y="0.5" width="11" height="15" fill="url(#fg)" stroke="#ebc55c"/><rect x="9.5" y="9.5" width="3" height="6" fill="#fde49a" stroke="#e6be4e"/></svg><div class="t" style="left:61px;top:525.84px;font-size:12px;line-height:12px;color:#000;">FlightModels--</div><svg style="position:absolute;left:42px;top:548px;" width="14" height="16" viewBox="0 0 14 16"><defs><linearGradient id="fg" x1="0" y1="0" x2="0" y2="1"><stop offset="0" stop-color="#fee9a4"/><stop offset="1" stop-color="#f9d774"/></linearGradient></defs><rect x="0.5" y="0.5" width="11" height="15" fill="url(#fg)" stroke="#ebc55c"/><rect x="9.5" y="9.5" width="3" height="6" fill="#fde49a" stroke="#e6be4e"/></svg><div class="t" style="left:61px;top:549.84px;font-size:12px;line-height:12px;color:#000;">FlightModels--</div></div><div style="position:absolute;left:1163px;top:135px;width:16px;height:564px;background:#f0f0f0"></div><div style="position:absolute;left:1163px;top:152px;width:15px;height:461px;background:#cdcdcd"></div><svg style="position:absolute;left:1167px;top:141px;" width="8" height="6" viewBox="0 0 8 6"><path d="M0.8 5 L3.8 1.5 L6.8 5" fill="none" stroke="#606060" stroke-width="1.8"/></svg><svg style="position:absolute;left:1167px;top:688px;" width="8" height="6" viewBox="0 0 8 6"><path d="M0.8 1 L3.8 4.5 L6.8 1" fill="none" stroke="#606060" stroke-width="1.8"/></svg><div class="t" style="left:1037.4px;top:705.54px;font-size:12px;line-height:12px;color:#1e3a5c;transform:scaleX(0.9380);transform-origin:left top;">Елементів: 9</div><div style="position:absolute;left:1114px;top:704px;width:1px;height:15px;background:#f0f0f0"></div><div style="position:absolute;left:1180px;top:135px;width:740px;height:563px;overflow:hidden;background:#fff"><div class="t" style="left:20px;top:7.34px;font-size:12px;line-height:12px;color:#4c607a;transform:scaleX(1.1084);transform-origin:left top;">Ім’я</div><div class="t" style="left:281px;top:7.34px;font-size:12px;line-height:12px;color:#4c607a;transform:scaleX(0.9699);transform-origin:left top;">Дата змінення</div><div class="t" style="left:425px;top:7.34px;font-size:12px;line-height:12px;color:#4c607a;transform:scaleX(0.9992);transform-origin:left top;">Тип</div><div class="t" style="left:545px;top:7.34px;font-size:12px;line-height:12px;color:#4c607a;transform:scaleX(0.9971);transform-origin:left top;">Розмір</div><div style="position:absolute;left:274px;top:0px;width:1px;height:25px;background:#e5e5e5"></div><div style="position:absolute;left:418px;top:0px;width:1px;height:25px;background:#e5e5e5"></div><div style="position:absolute;left:538px;top:0px;width:1px;height:25px;background:#e5e5e5"></div><div style="position:absolute;left:618px;top:0px;width:1px;height:25px;background:#e5e5e5"></div><svg style="position:absolute;left:140px;top:0px;" width="10" height="6" viewBox="0 0 10 6"><path d="M0.7 5 L4.8 1 L8.9 5" fill="none" stroke="#8a8a8a" stroke-width="1.2"/></svg><div style="position:absolute;left:17px;top:199px;width:598px;height:22px;background:#e5f3ff"></div><svg style="position:absolute;left:23px;top:33px;" width="14" height="16" viewBox="0 0 14 16"><defs><linearGradient id="fg" x1="0" y1="0" x2="0" y2="1"><stop offset="0" stop-color="#fee9a4"/><stop offset="1" stop-color="#f9d774"/></linearGradient></defs><rect x="0.5" y="0.5" width="11" height="15" fill="url(#fg)" stroke="#ebc55c"/><rect x="9.5" y="9.5" width="3" height="6" fill="#fde49a" stroke="#e6be4e"/></svg><div class="t" style="left:41.700000000000045px;top:36.04px;font-size:12px;line-height:12px;color:#000;transform:scaleX(0.8811);transform-origin:left top;">COD</div><div class="t" style="left:281px;top:36.04px;font-size:12px;line-height:12px;color:#6d6d6d;transform:scaleX(0.8938);transform-origin:left top;">26.06.2020 18:41</div><div class="t" style="left:425px;top:36.04px;font-size:12px;line-height:12px;color:#6d6d6d;transform:scaleX(0.9723);transform-origin:left top;">Папка файлів</div><svg style="position:absolute;left:23px;top:54px;" width="14" height="16" viewBox="0 0 14 16"><defs><linearGradient id="fg" x1="0" y1="0" x2="0" y2="1"><stop offset="0" stop-color="#fee9a4"/><stop offset="1" stop-color="#f9d774"/></linearGradient></defs><rect x="0.5" y="0.5" width="11" height="15" fill="url(#fg)" stroke="#ebc55c"/><rect x="9.5" y="9.5" width="3" height="6" fill="#fde49a" stroke="#e6be4e"/></svg><div class="t" style="left:41.700000000000045px;top:57.04px;font-size:12px;line-height:12px;color:#000;transform:scaleX(0.8433);transform-origin:left top;">GUI</div><div class="t" style="left:281px;top:57.04px;font-size:12px;line-height:12px;color:#6d6d6d;transform:scaleX(0.8938);transform-origin:left top;">26.06.2020 20:06</div><div class="t" style="left:425px;top:57.04px;font-size:12px;line-height:12px;color:#6d6d6d;transform:scaleX(0.9723);transform-origin:left top;">Папка файлів</div><svg style="position:absolute;left:23px;top:75px;" width="14" height="16" viewBox="0 0 14 16"><defs><linearGradient id="fg" x1="0" y1="0" x2="0" y2="1"><stop offset="0" stop-color="#fee9a4"/><stop offset="1" stop-color="#f9d774"/></linearGradient></defs><rect x="0.5" y="0.5" width="11" height="15" fill="url(#fg)" stroke="#ebc55c"/><rect x="9.5" y="9.5" width="3" height="6" fill="#fde49a" stroke="#e6be4e"/></svg><div class="t" style="left:41.700000000000045px;top:78.04px;font-size:12px;line-height:12px;color:#000;transform:scaleX(0.9923);transform-origin:left top;">КЛАСИ</div><div class="t" style="left:281px;top:78.04px;font-size:12px;line-height:12px;color:#6d6d6d;transform:scaleX(0.8938);transform-origin:left top;">26.06.2020 23:54</div><div class="t" style="left:425px;top:78.04px;font-size:12px;line-height:12px;color:#6d6d6d;transform:scaleX(0.9723);transform-origin:left top;">Папка файлів</div><svg style="position:absolute;left:23px;top:96px;" width="13" height="16" viewBox="0 0 13 16"><path d="M0.5 0.5 H8 L11.5 4 V15.5 H0.5 Z" fill="#f6f6f6" stroke="#8c8c8c"/><path d="M8 0.5 V4 H11.5" fill="none" stroke="#a8a8a8"/></svg><div class="t" style="left:41.700000000000045px;top:99.04px;font-size:12px;line-height:12px;color:#000;transform:scaleX(0.9064);transform-origin:left top;">3CA1157423561944</div><div class="t" style="left:281px;top:99.04px;font-size:12px;line-height:12px;color:#6d6d6d;transform:scaleX(0.8938);transform-origin:left top;">24.06.2020 22:03</div><div class="t" style="left:425px;top:99.04px;font-size:12px;line-height:12px;color:#6d6d6d;transform:scaleX(0.9487);transform-origin:left top;">Файл</div><div class="t" style="left:579.45px;top:99.04px;font-size:12px;line-height:12px;color:#6d6d6d;">13 КБ</div><svg style="position:absolute;left:23px;top:117px;" width="13" height="16" viewBox="0 0 13 16"><path d="M0.5 0.5 H8 L11.5 4 V15.5 H0.5 Z" fill="#f6f6f6" stroke="#8c8c8c"/><path d="M8 0.5 V4 H11.5" fill="none" stroke="#a8a8a8"/></svg><div class="t" style="left:41.700000000000045px;top:120.04px;font-size:12px;line-height:12px;color:#000;transform:scaleX(0.8995);transform-origin:left top;">7D4C3D70FBBA011C</div><div class="t" style="left:281px;top:120.04px;font-size:12px;line-height:12px;color:#6d6d6d;transform:scaleX(0.8938);transform-origin:left top;">26.06.2020 23:53</div><div class="t" style="left:425px;top:120.04px;font-size:12px;line-height:12px;color:#6d6d6d;transform:scaleX(0.9487);transform-origin:left top;">Файл</div><div class="t" style="left:586.12px;top:120.04px;font-size:12px;line-height:12px;color:#6d6d6d;">6 КБ</div><svg style="position:absolute;left:23px;top:138px;" width="13" height="16" viewBox="0 0 13 16"><path d="M0.5 0.5 H8 L11.5 4 V15.5 H0.5 Z" fill="#f6f6f6" stroke="#8c8c8c"/><path d="M8 0.5 V4 H11.5" fill="none" stroke="#a8a8a8"/></svg><div class="t" style="left:41.700000000000045px;top:141.04px;font-size:12px;line-height:12px;color:#000;transform:scaleX(0.8832);transform-origin:left top;">70FD4302E2509A44</div><div class="t" style="left:281px;top:141.04px;font-size:12px;line-height:12px;color:#6d6d6d;transform:scaleX(0.8938);transform-origin:left top;">24.06.2020 22:03</div><div class="t" style="left:425px;top:141.04px;font-size:12px;line-height:12px;color:#6d6d6d;transform:scaleX(0.9487);transform-origin:left top;">Файл</div><div class="t" style="left:586.12px;top:141.04px;font-size:12px;line-height:12px;color:#6d6d6d;">4 КБ</div><svg style="position:absolute;left:23px;top:159px;" width="13" height="16" viewBox="0 0 13 16"><path d="M0.5 0.5 H8 L11.5 4 V15.5 H0.5 Z" fill="#f6f6f6" stroke="#8c8c8c"/><path d="M8 0.5 V4 H11.5" fill="none" stroke="#a8a8a8"/></svg><div class="t" style="left:41.700000000000045px;top:162.04px;font-size:12px;line-height:12px;color:#000;transform:scaleX(0.8978);transform-origin:left top;">BF27C4A2C9F9C8D6</div><div class="t" style="left:281px;top:162.04px;font-size:12px;line-height:12px;color:#6d6d6d;transform:scaleX(0.8938);transform-origin:left top;">26.06.2020 23:53</div><div class="t" style="left:425px;top:162.04px;font-size:12px;line-height:12px;color:#6d6d6d;transform:scaleX(0.9487);transform-origin:left top;">Файл</div><div class="t" style="left:586.12px;top:162.04px;font-size:12px;line-height:12px;color:#6d6d6d;">5 КБ</div><svg style="position:absolute;left:23px;top:180px;" width="13" height="16" viewBox="0 0 13 16"><path d="M0.5 0.5 H8.5 L12.5 4.5 V15.5 H0.5 Z" fill="#fbfbfb" stroke="#7c7c7c"/><path d="M8.5 0.5 V4.5 H12.5" fill="none" stroke="#a0a0a0"/><path d="M2.5 5.5 H10.5 M2.5 7.5 H10.5 M2.5 9.5 H10.5 M2.5 11.5 H10.5 M2.5 13.5 H10.5" stroke="#7a7a7a" stroke-width="1"/></svg><div class="t" style="left:41.700000000000045px;top:183.04px;font-size:12px;line-height:12px;color:#000;transform:scaleX(0.9237);transform-origin:left top;">F4F-2_FM--TEST.txt</div><div class="t" style="left:281px;top:183.04px;font-size:12px;line-height:12px;color:#6d6d6d;transform:scaleX(0.8938);transform-origin:left top;">07.06.2020 16:33</div><div class="t" style="left:425px;top:183.04px;font-size:12px;line-height:12px;color:#6d6d6d;transform:scaleX(0.9898);transform-origin:left top;">Текстовий докум...</div><div class="t" style="left:586.12px;top:183.04px;font-size:12px;line-height:12px;color:#6d6d6d;">1 КБ</div><svg style="position:absolute;left:23px;top:201px;" width="13" height="16" viewBox="0 0 13 16"><path d="M0.5 0.5 H8 L11.5 4 V15.5 H0.5 Z" fill="#f6f6f6" stroke="#8c8c8c"/><path d="M8 0.5 V4 H11.5" fill="none" stroke="#a8a8a8"/></svg><div class="t" style="left:41.700000000000045px;top:204.04px;font-size:12px;line-height:12px;color:#000;transform:scaleX(0.9063);transform-origin:left top;">I_185M-71</div><div class="t" style="left:281px;top:204.04px;font-size:12px;line-height:12px;color:#6d6d6d;transform:scaleX(0.8938);transform-origin:left top;">26.06.2020 20:05</div><div class="t" style="left:425px;top:204.04px;font-size:12px;line-height:12px;color:#6d6d6d;transform:scaleX(0.9487);transform-origin:left top;">Файл</div><div class="t" style="left:579.45px;top:204.04px;font-size:12px;line-height:12px;color:#6d6d6d;">48 КБ</div></div><div style="position:absolute;left:1248px;top:368px;width:181px;height:49px;background:#fff;border:1px solid #767676;box-sizing:border-box;box-shadow:2px 2px 3px rgba(0,0,0,0.35)"></div><div class="t" style="left:1254px;top:372.14px;font-size:12px;line-height:12px;color:#575757;transform:scaleX(0.9735);transform-origin:left top;">Тип: Файл</div><div class="t" style="left:1254px;top:387.04px;font-size:12px;line-height:12px;color:#575757;transform:scaleX(0.9491);transform-origin:left top;">Розмір: 47,2 КБ</div><div class="t" style="left:1254px;top:401.44px;font-size:12px;line-height:12px;color:#575757;transform:scaleX(0.9361);transform-origin:left top;">Дата змінення: 26.06.2020 20:05</div><svg style="position:absolute;left:1196px;top:359px;" width="126" height="5" viewBox="0 0 126 5"><path d="M0 3.3 L125 1.6" stroke="#2f8a1e" stroke-width="2"/></svg><svg style="position:absolute;left:1252px;top:424px;" width="187" height="4" viewBox="0 0 187 4"><path d="M0 1.5 L186 2.2" stroke="#2f8a1e" stroke-width="2"/></svg><svg style="position:absolute;left:1226px;top:486px;" width="9" height="3" viewBox="0 0 9 3"><path d="M0 1.5 H8" stroke="#2f8a1e" stroke-width="2"/></svg><svg style="position:absolute;left:1597px;top:125px;" width="42" height="3" viewBox="0 0 42 3"><path d="M0 1.5 H41" stroke="#4b3bf2" stroke-width="2.2"/></svg><svg style="position:absolute;left:1649px;top:124px;" width="77" height="5" viewBox="0 0 77 5"><path d="M0 3.2 L76 1.4" stroke="#f0502a" stroke-width="2.2"/></svg><div style="position:absolute;left:0px;top:1040px;width:1920px;height:40px;background:linear-gradient(90deg,#222c3e 0px,#252f42 330px,#363f4a 420px,#353e4a 500px,#1f2846 590px,#1e2746 1340px,#2a3346 1470px,#343a46 1800px,#3a3f48 1920px)"></div><svg style="position:absolute;left:15px;top:1051px;" width="18" height="18" viewBox="0 0 18 18"><path d="M0.5 2.6 L7.3 1.6 V8.2 H0.5 Z M8.3 1.4 L17 0.2 V8.2 H8.3 Z M0.5 9.2 H7.3 V15.9 L0.5 14.9 Z M8.3 9.2 H17 V17.3 L8.3 16.1 Z" fill="#ffffff"/></svg><svg style="position:absolute;left:63px;top:1052px;" width="17" height="16" viewBox="0 0 17 16"><path d="M1 1 V2.5 H12 V1 M1 14.5 V13 H12 V14.5" fill="none" stroke="#fff" stroke-width="1.1"/><rect x="1.5" y="4.5" width="10" height="6.5" fill="none" stroke="#fff" stroke-width="1.1"/><path d="M15.3 1 V15" stroke="#fff" stroke-width="1.1"/><rect x="14.2" y="4" width="2.2" height="3" fill="#fff"/></svg><svg style="position:absolute;left:111px;top:1048px;" width="24" height="24" viewBox="0 0 24 24"><path d="M8 5 Q8 0.8 12 0.8 Q16 0.8 16 5" fill="none" stroke="#e8e8e8" stroke-width="1.3"/><path d="M9.5 5 Q10 2.5 12.5 2.6" fill="none" stroke="#e8e8e8" stroke-width="1"/><path d="M0.5 6 H23.5 V21.5 Q23.5 23.5 21.5 23.5 H2.5 Q0.5 23.5 0.5 21.5 Z" fill="#fafafa"/><rect x="6" y="9.5" width="5.5" height="5.5" fill="#f25022"/><rect x="12.5" y="9.5" width="5.5" height="5.5" fill="#7fba00"/><rect x="6" y="16" width="5.5" height="5.5" fill="#00a4ef"/><rect x="12.5" y="16" width="5.5" height="5.5" fill="#ffb900"/></svg><svg style="position:absolute;left:159px;top:1047px;" width="25" height="25" viewBox="0 0 25 25"><path d="M12.5 4 A8.5 8.5 0 1 0 20.5 15 H15.5 A4 4 0 0 1 8.5 13 H21 A8.5 8.5 0 0 0 12.5 4 Z M8.8 10.6 A3.8 3.8 0 0 1 16.2 10.6 Z" fill="#2fa8e8"/><path d="M3 22 Q-1 19 6 10 Q15 0 23 2 Q25 4 21 9" fill="none" stroke="#e8b920" stroke-width="1.7"/></svg><svg style="position:absolute;left:209px;top:1048px;" width="25" height="25" viewBox="0 0 25 25"><defs><linearGradient id="eg1" x1="0" y1="0" x2="1" y2="0"><stop offset="0" stop-color="#2fa9e0"/><stop offset="1" stop-color="#4fd36c"/></linearGradient></defs><path d="M1.2 11 Q2.5 0.8 12.5 0.6 Q23.8 0.8 24 12.5 Q24 18 18.5 17.8 Q13.5 17.5 14.5 13.5 Q14 9 9.5 9.2 Q4 9.5 1.2 11 Z" fill="url(#eg1)"/><path d="M1.2 11 Q4 9.5 9.5 9.2 Q14 9 14.5 13.5 Q13.5 17.5 18.5 17.8 Q21 18 22 17.2 Q19 24.2 12 24.2 Q2 24 1 14 Z" fill="#1f6cc8"/><path d="M4 13 Q6 19 12.5 21.5 Q6 21 4 13 Z" fill="#1650a8"/><ellipse cx="11.6" cy="13.8" rx="3" ry="2.6" fill="#232d40"/></svg><svg style="position:absolute;left:258px;top:1048px;" width="23" height="24" viewBox="0 0 23 24"><defs><linearGradient id="og" x1="0" y1="0" x2="0" y2="1"><stop offset="0" stop-color="#ff2a3a"/><stop offset="1" stop-color="#c01020"/></linearGradient></defs><ellipse cx="11.5" cy="12" rx="11.2" ry="11.6" fill="url(#og)"/><ellipse cx="11.5" cy="12" rx="4" ry="8.3" fill="#232d40"/></svg><div style="position:absolute;left:250px;top:1078px;width:40px;height:2px;background:#a9c0ec"></div><svg style="position:absolute;left:307px;top:1047px;" width="24" height="25" viewBox="0 0 24 25"><defs><linearGradient id="yg" x1="0" y1="0" x2="0" y2="1"><stop offset="0" stop-color="#f9d21a"/><stop offset="1" stop-color="#e08a05"/></linearGradient></defs><rect x="0" y="0" width="24" height="25" fill="url(#yg)" stroke="#fff3b0" stroke-width="0.6"/><path d="M3 9 Q5 6 9 7 L9 19 Q4 16 3 9 Z" fill="#1b4f9c"/><path d="M10 5 Q20 5 20 12 Q20 18 11 19 Q13 12 10 5 Z" fill="#1b4f9c"/><path d="M11 7 Q16 11 12 17 Q12.5 12 11 7Z" fill="#fff8d8"/></svg><div style="position:absolute;left:344px;top:1040px;width:45px;height:40px;background:#49525f"></div><div style="position:absolute;left:389px;top:1040px;width:3px;height:40px;background:#3c4452"></div><div style="position:absolute;left:344px;top:1078px;width:48px;height:2px;background:#a9c0ec"></div><svg style="position:absolute;left:356px;top:1050px;" width="22" height="20" viewBox="0 0 22 20"><path d="M0 1.5 Q0 0 1.5 0 H8 L9.5 2 H20.5 Q22 2 22 3.5 V18.5 Q22 20 20.5 20 H1.5 Q0 20 0 18.5 Z" fill="#f0b530"/><rect x="0" y="3.5" width="22" height="16.5" fill="#fbd56a"/><path d="M5 20 V11.5 H17 V20 H14 V14.5 H8 V20 Z" fill="#2d8fe0"/></svg><div class="t" style="left:1477px;top:1052.14px;font-size:12px;line-height:12px;color:#ffffff;transform:scaleX(0.9225);transform-origin:left top;">RU</div><svg style="position:absolute;left:1500px;top:1051px;" width="16" height="16" viewBox="0 0 16 16"><circle cx="8" cy="8" r="7.5" fill="#1c3fb8" stroke="#c8d4f4" stroke-width="1"/><text x="8" y="12.3" font-size="11" font-weight="700" text-anchor="middle" fill="#fff" font-family="Liberation Sans">?</text></svg><svg style="position:absolute;left:1541px;top:1052px;" width="16" height="16" viewBox="0 0 16 16"><rect x="0" y="0" width="16" height="16" rx="1.5" fill="#f07a1a"/><path d="M4 12 H12 M5 9.5 Q8 5 11 4" fill="none" stroke="#fff" stroke-width="1.3"/></svg><svg style="position:absolute;left:1564px;top:1051px;" width="17" height="17" viewBox="0 0 17 17"><path d="M3 9.5 Q0.5 7 3.5 6 Q5 2.5 8.5 3.5 L13.5 0.8 Q16.5 1.5 14 5 Q16.8 9 13.5 12.5 L14.5 15.5 Q12 17 10.5 14 Q6 15.5 4 12.5 L1 13.5 Q0 11.5 3 9.5 Z" fill="#f5781e"/><circle cx="8.8" cy="8.6" r="3.6" fill="#f5f0ea"/><text x="8.8" y="11.2" font-size="7" text-anchor="middle" fill="#f5781e" font-family="Liberation Sans" font-weight="700">a</text></svg><svg style="position:absolute;left:1589px;top:1052px;" width="16" height="16" viewBox="0 0 16 16"><rect x="0" y="0" width="16" height="16" fill="#f0c020"/><path d="M2 6 Q4 4 6 5 V13 Q3 11 2 6 Z M7 3 Q14 3 14 8 Q14 12 7 13 Q9 8 7 3Z" fill="#1b4f9c"/></svg><svg style="position:absolute;left:1613px;top:1053px;" width="17" height="14" viewBox="0 0 17 14"><rect x="1" y="3" width="15" height="8" fill="#d8d8d8" stroke="#999" stroke-width="0.8"/><rect x="3" y="0" width="11" height="4" fill="#eee"/><path d="M6 9 L9 12.5 L15 5" fill="none" stroke="#3cc04a" stroke-width="2.2"/></svg><svg style="position:absolute;left:1637px;top:1052px;" width="16" height="16" viewBox="0 0 16 16"><defs><linearGradient id="rg" x1="0" y1="0" x2="0" y2="1"><stop offset="0" stop-color="#a8352a"/><stop offset="1" stop-color="#6a1410"/></linearGradient></defs><rect x="0" y="0" width="16" height="16" fill="url(#rg)"/><circle cx="8" cy="6" r="2.3" fill="none" stroke="#e8d8d0" stroke-width="1.3"/><path d="M3 13 Q3 9 8 9 Q13 9 13 13 Z" fill="#e8d8d0"/></svg><svg style="position:absolute;left:1661px;top:1052px;" width="16" height="16" viewBox="0 0 16 16"><rect x="0" y="0" width="16" height="16" fill="#0a0a0a"/><path d="M8 2 L4 8 L8 14 L12 8 Z M8 5 L6 8 L8 11" fill="none" stroke="#29b6e8" stroke-width="1.5"/></svg><svg style="position:absolute;left:1685px;top:1052px;" width="16" height="16" viewBox="0 0 16 16"><rect x="0" y="0" width="16" height="16" fill="#8a1a1a"/><path d="M12 4 H5 Q3 4 3 6 Q3 8 5 8 H11 Q13 8 13 10 Q13 12 11 12 H4" fill="none" stroke="#f0a0a0" stroke-width="1.6"/></svg><svg style="position:absolute;left:1710px;top:1053px;" width="15" height="15" viewBox="0 0 15 15"><circle cx="7.5" cy="7.5" r="7" fill="#1f6fd8"/><path d="M3 4 Q6 2 8 5 Q6 9 4 7Z M9 9 Q12 8 13 11 Q10 14 9 12Z" fill="#5ac84a"/></svg><svg style="position:absolute;left:1733px;top:1051px;" width="17" height="18" viewBox="0 0 17 18"><path d="M2 3 Q11 1 15 12 Z" fill="#e8e8e8"/><ellipse cx="9" cy="9" rx="6" ry="5" transform="rotate(40 9 9)" fill="#222" stroke="#ddd" stroke-width="0.8"/><circle cx="4" cy="15" r="2" fill="#ddd"/></svg><svg style="position:absolute;left:1757px;top:1052px;" width="17" height="16" viewBox="0 0 17 16"><path d="M1 5.5 H4 L8 2 V14 L4 10.5 H1 Z" fill="none" stroke="#fff" stroke-width="1"/><path d="M10.5 5.5 Q12 8 10.5 10.5 M12.5 4 Q15 8 12.5 12" fill="none" stroke="#fff" stroke-width="1"/><path d="M14.5 2.5 Q18 8 14.5 13.5" fill="none" stroke="#8a8a8a" stroke-width="1"/></svg><svg style="position:absolute;left:1781px;top:1052px;" width="17" height="17" viewBox="0 0 17 17"><rect x="3.5" y="3.5" width="13" height="8" fill="none" stroke="#fff" stroke-width="1"/><path d="M10 11.5 V14.5 M6 15.5 H14" stroke="#fff" stroke-width="1"/><rect x="0.5" y="0.5" width="5" height="5" fill="#363c47" stroke="#fff" stroke-width="1"/></svg><div class="t" style="left:1821px;top:1045.04px;font-size:12px;line-height:12px;color:#ffffff;transform:scaleX(0.8658);transform-origin:left top;">10:17</div><div class="t" style="left:1807px;top:1062.54px;font-size:12px;line-height:12px;color:#ffffff;transform:scaleX(0.9107);transform-origin:left top;">27.06.2020</div><svg style="position:absolute;left:1879px;top:1052px;" width="17" height="17" viewBox="0 0 17 17"><path d="M0.5 0.5 H16.5 V11.5 H9 L6 15 V11.5 H0.5 Z" fill="none" stroke="#fff" stroke-width="1.1"/></svg><div style="position:absolute;left:1915px;top:1040px;width:1px;height:40px;background:#5a6270"></div>
</body></html>
